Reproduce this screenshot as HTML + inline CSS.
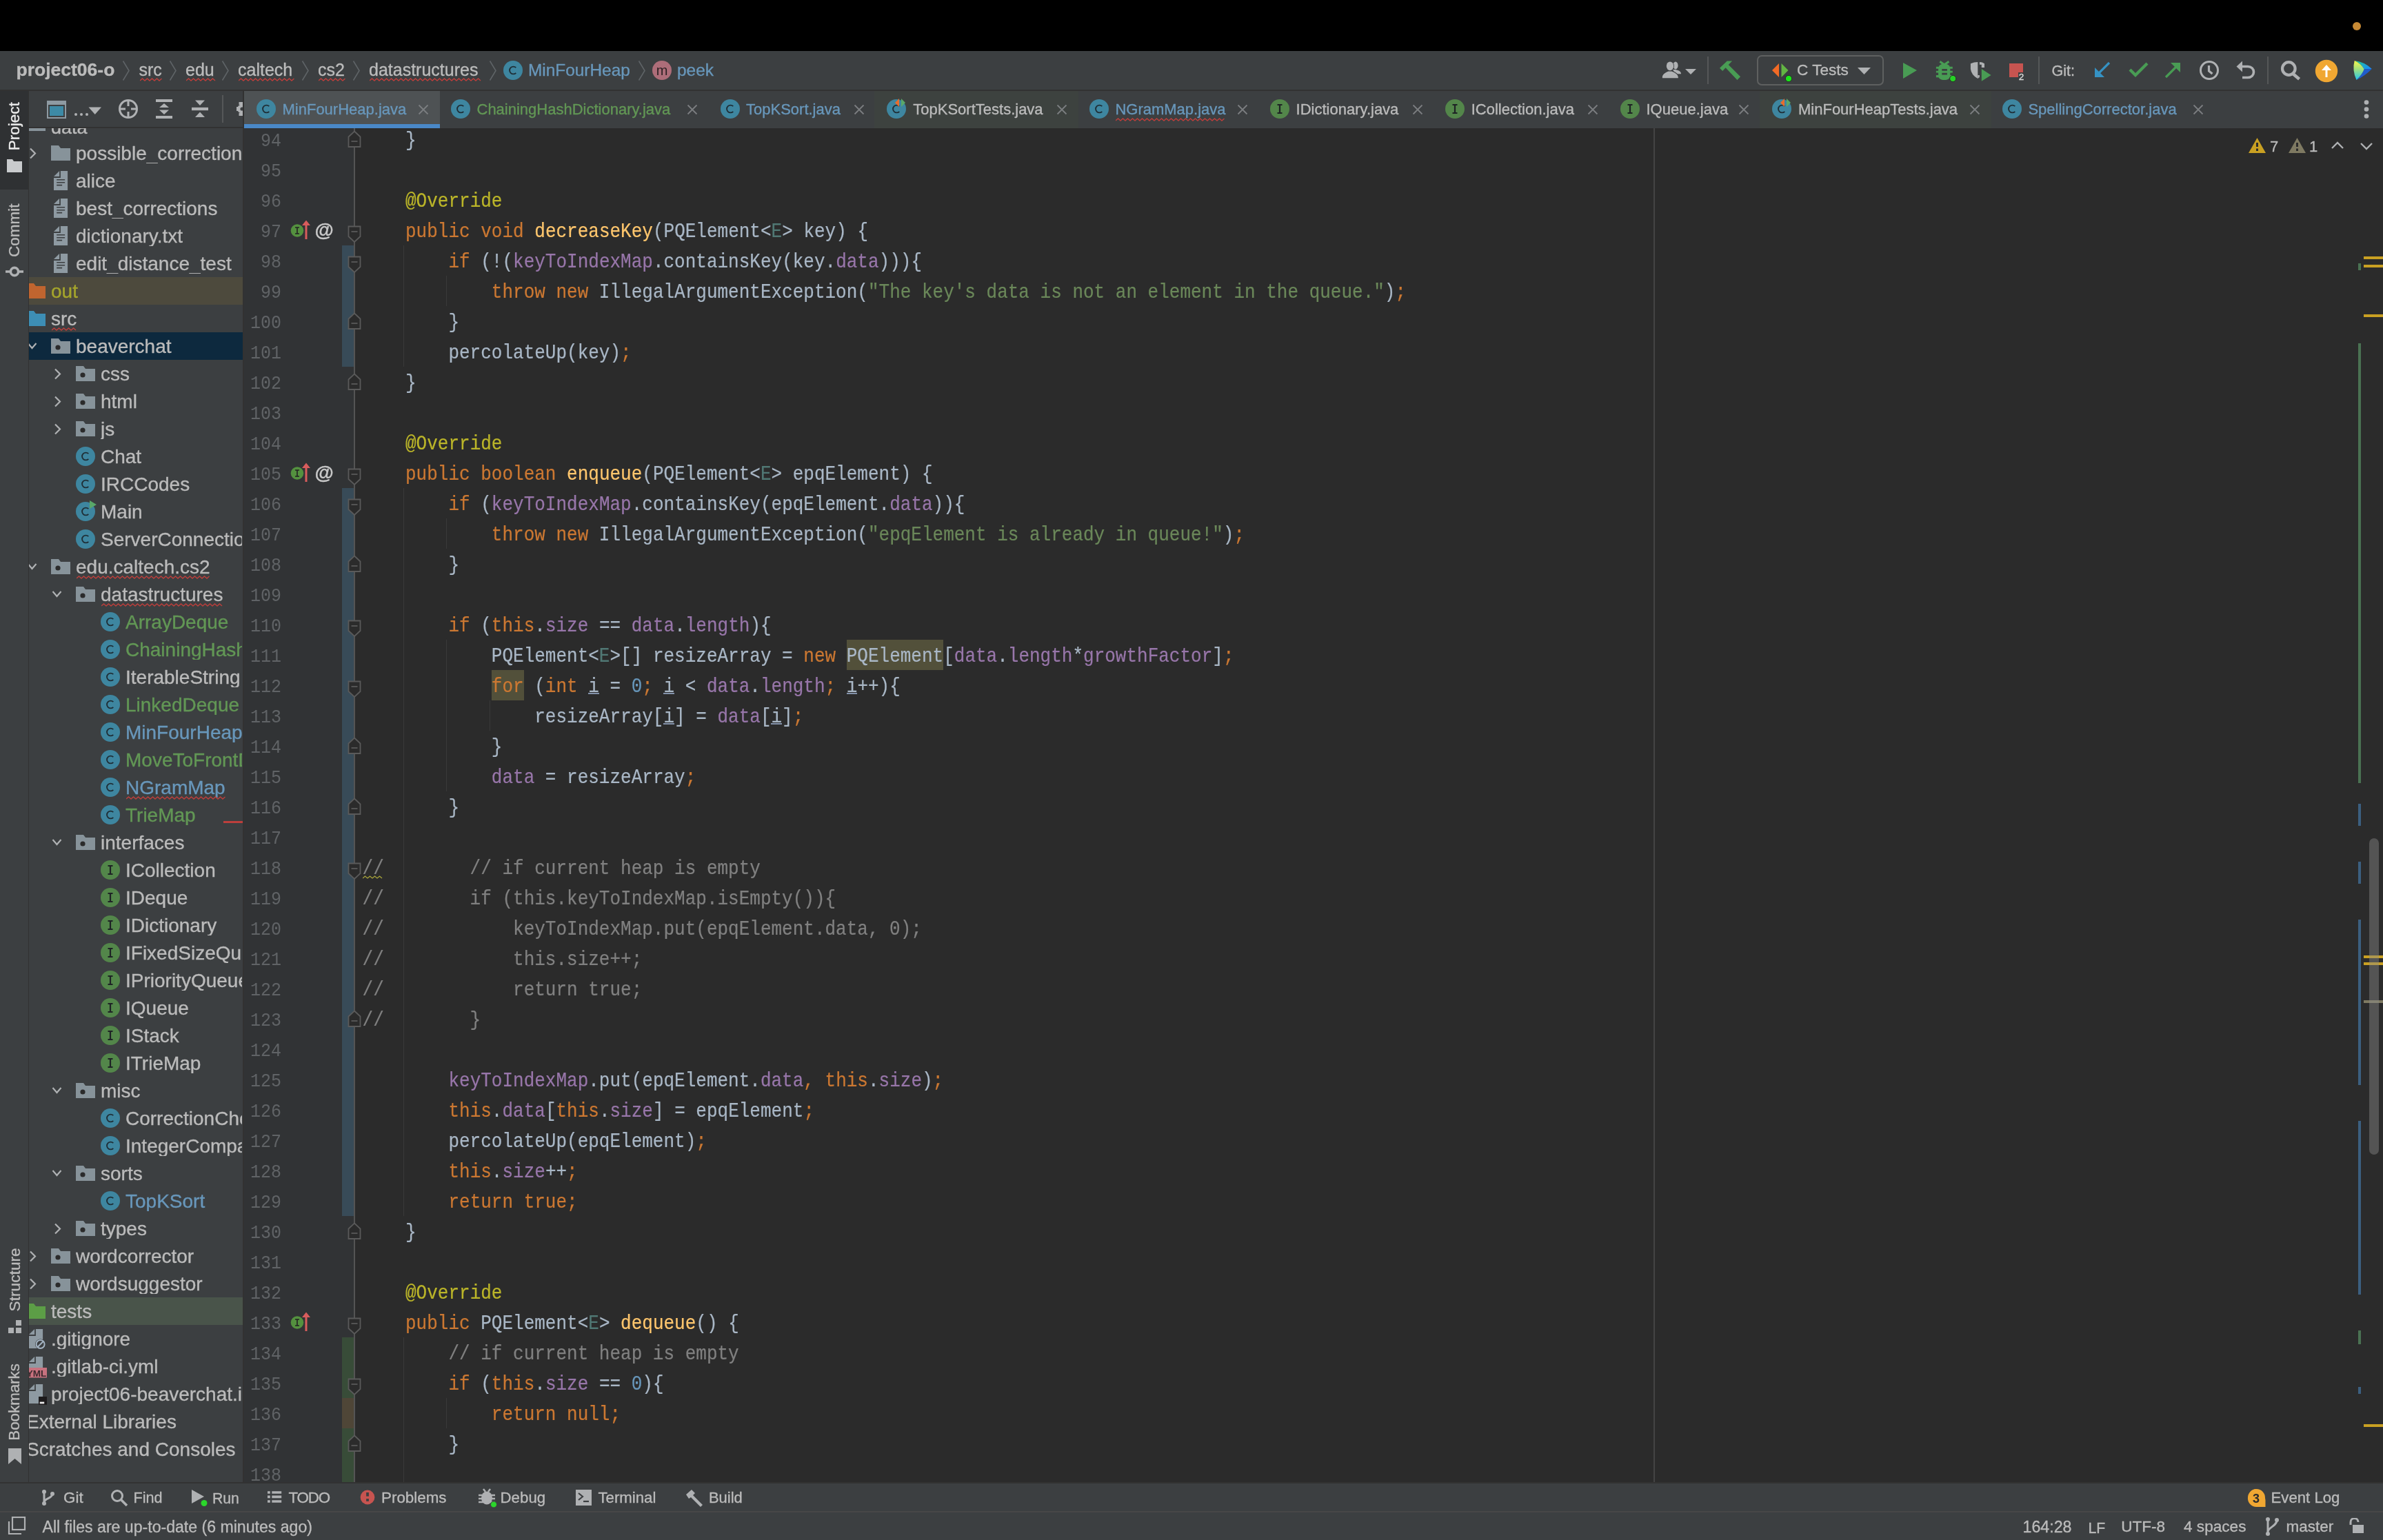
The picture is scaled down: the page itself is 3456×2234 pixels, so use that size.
<!DOCTYPE html>
<html><head><meta charset="utf-8"><title>IntelliJ</title><style>
*{margin:0;padding:0;box-sizing:border-box}
html,body{width:3456px;height:2234px;overflow:hidden;background:#000;-webkit-font-smoothing:antialiased}
#root{position:absolute;left:0;top:0;width:3456px;height:2234px;will-change:transform}
#root>div,#root>svg{position:absolute}
</style></head>
<body><div id="root">
<div style="left:0px;top:0px;width:3456px;height:74px;background:#000;"></div>
<div style="left:3412px;top:32px;width:12px;height:12px;background:#c78a35;border-radius:50%"></div>
<div style="left:0px;top:74px;width:3456px;height:57px;background:#3c3f41;"></div>
<div style="left:0px;top:130px;width:3456px;height:2px;background:#323232;"></div>
<div style="left:0px;top:132px;width:41px;height:2018px;background:#3c3f41;"></div>
<div style="left:0px;top:132px;width:41px;height:143px;background:#2f3133;"></div>
<div style="left:41px;top:132px;width:1px;height:2018px;background:#323232;"></div>
<div style="left:42px;top:132px;width:310px;height:2018px;background:#3c3f41;"></div>
<div style="left:42px;top:184px;width:310px;height:2px;background:#323232;"></div>
<div style="left:352px;top:131px;width:2px;height:2019px;background:#323232;"></div>
<div style="left:354px;top:132px;width:3102px;height:54px;background:#3c3f41;"></div>
<div style="left:354px;top:186px;width:3102px;height:1964px;background:#2b2b2b;"></div>
<div style="left:354px;top:186px;width:160px;height:1964px;background:#313335;"></div>
<div style="left:0px;top:2150px;width:3456px;height:43px;background:#3c3f41;"></div>
<div style="left:0px;top:2150px;width:3456px;height:2px;background:#323232;"></div>
<div style="left:0px;top:2194px;width:3456px;height:40px;background:#3c3f41;"></div>
<div style="left:0px;top:2192px;width:3456px;height:2px;background:#474747;"></div>
<div style="left:712.8px;top:971.5px;width:46.8px;height:44px;background:#52503a;"></div>
<div style="left:1227.6px;top:927.5px;width:140.4px;height:44px;background:#52503a;"></div>
<div style="left:853.2px;top:1004.5px;width:15.6px;height:2px;background:#8493ab;"></div>
<div style="left:962.4000000000001px;top:1004.5px;width:15.6px;height:2px;background:#8493ab;"></div>
<div style="left:1227.6px;top:1004.5px;width:15.6px;height:2px;background:#8493ab;"></div>
<div style="left:962.4000000000001px;top:1048.5px;width:15.6px;height:2px;background:#8493ab;"></div>
<div style="left:1118.4px;top:1048.5px;width:15.6px;height:2px;background:#8493ab;"></div>
<div style="left:585px;top:355.5px;width:1px;height:176.0px;background:#393939;"></div>
<div style="left:647px;top:399.5px;width:1px;height:44.0px;background:#393939;"></div>
<div style="left:585px;top:707.5px;width:1px;height:1056.0px;background:#393939;"></div>
<div style="left:647px;top:751.5px;width:1px;height:44.0px;background:#393939;"></div>
<div style="left:647px;top:927.5px;width:1px;height:220.0px;background:#393939;"></div>
<div style="left:710px;top:1015.5px;width:1px;height:44.0px;background:#393939;"></div>
<div style="left:585px;top:1939.5px;width:1px;height:210.5px;background:#393939;"></div>
<div style="left:647px;top:2027.5px;width:1px;height:44.0px;background:#393939;"></div>
<div style="left:2398px;top:186px;width:2px;height:1964px;background:#444444;"></div>
<div style="left:525.6px;top:183.08px;font:26px/44px 'Liberation Mono', monospace;color:#a9b7c6;white-space:pre;transform:scaleY(1.1);transform-origin:0 28.92px;-webkit-text-stroke:0.2px currentColor">    }</div>
<div style="left:525.6px;top:271.08px;font:26px/44px 'Liberation Mono', monospace;color:#a9b7c6;white-space:pre;transform:scaleY(1.1);transform-origin:0 28.92px;-webkit-text-stroke:0.2px currentColor">    <span style="color:#bbb529">@Override</span></div>
<div style="left:525.6px;top:315.08px;font:26px/44px 'Liberation Mono', monospace;color:#a9b7c6;white-space:pre;transform:scaleY(1.1);transform-origin:0 28.92px;-webkit-text-stroke:0.2px currentColor">    <span style="color:#cc7832">public</span> <span style="color:#cc7832">void</span> <span style="color:#ffc66d">decreaseKey</span>(PQElement&lt;<span style="color:#507874">E</span>&gt; key) {</div>
<div style="left:525.6px;top:359.08px;font:26px/44px 'Liberation Mono', monospace;color:#a9b7c6;white-space:pre;transform:scaleY(1.1);transform-origin:0 28.92px;-webkit-text-stroke:0.2px currentColor">        <span style="color:#cc7832">if</span> (!(<span style="color:#9876aa">keyToIndexMap</span>.containsKey(key.<span style="color:#9876aa">data</span>))){</div>
<div style="left:525.6px;top:403.08px;font:26px/44px 'Liberation Mono', monospace;color:#a9b7c6;white-space:pre;transform:scaleY(1.1);transform-origin:0 28.92px;-webkit-text-stroke:0.2px currentColor">            <span style="color:#cc7832">throw</span> <span style="color:#cc7832">new</span> IllegalArgumentException(<span style="color:#6a8759">&quot;The key&#x27;s data is not an element in the queue.&quot;</span>)<span style="color:#cc7832">;</span></div>
<div style="left:525.6px;top:447.08px;font:26px/44px 'Liberation Mono', monospace;color:#a9b7c6;white-space:pre;transform:scaleY(1.1);transform-origin:0 28.92px;-webkit-text-stroke:0.2px currentColor">        }</div>
<div style="left:525.6px;top:491.08px;font:26px/44px 'Liberation Mono', monospace;color:#a9b7c6;white-space:pre;transform:scaleY(1.1);transform-origin:0 28.92px;-webkit-text-stroke:0.2px currentColor">        percolateUp(key)<span style="color:#cc7832">;</span></div>
<div style="left:525.6px;top:535.08px;font:26px/44px 'Liberation Mono', monospace;color:#a9b7c6;white-space:pre;transform:scaleY(1.1);transform-origin:0 28.92px;-webkit-text-stroke:0.2px currentColor">    }</div>
<div style="left:525.6px;top:623.08px;font:26px/44px 'Liberation Mono', monospace;color:#a9b7c6;white-space:pre;transform:scaleY(1.1);transform-origin:0 28.92px;-webkit-text-stroke:0.2px currentColor">    <span style="color:#bbb529">@Override</span></div>
<div style="left:525.6px;top:667.08px;font:26px/44px 'Liberation Mono', monospace;color:#a9b7c6;white-space:pre;transform:scaleY(1.1);transform-origin:0 28.92px;-webkit-text-stroke:0.2px currentColor">    <span style="color:#cc7832">public</span> <span style="color:#cc7832">boolean</span> <span style="color:#ffc66d">enqueue</span>(PQElement&lt;<span style="color:#507874">E</span>&gt; epqElement) {</div>
<div style="left:525.6px;top:711.08px;font:26px/44px 'Liberation Mono', monospace;color:#a9b7c6;white-space:pre;transform:scaleY(1.1);transform-origin:0 28.92px;-webkit-text-stroke:0.2px currentColor">        <span style="color:#cc7832">if</span> (<span style="color:#9876aa">keyToIndexMap</span>.containsKey(epqElement.<span style="color:#9876aa">data</span>)){</div>
<div style="left:525.6px;top:755.08px;font:26px/44px 'Liberation Mono', monospace;color:#a9b7c6;white-space:pre;transform:scaleY(1.1);transform-origin:0 28.92px;-webkit-text-stroke:0.2px currentColor">            <span style="color:#cc7832">throw</span> <span style="color:#cc7832">new</span> IllegalArgumentException(<span style="color:#6a8759">&quot;epqElement is already in queue!&quot;</span>)<span style="color:#cc7832">;</span></div>
<div style="left:525.6px;top:799.08px;font:26px/44px 'Liberation Mono', monospace;color:#a9b7c6;white-space:pre;transform:scaleY(1.1);transform-origin:0 28.92px;-webkit-text-stroke:0.2px currentColor">        }</div>
<div style="left:525.6px;top:887.08px;font:26px/44px 'Liberation Mono', monospace;color:#a9b7c6;white-space:pre;transform:scaleY(1.1);transform-origin:0 28.92px;-webkit-text-stroke:0.2px currentColor">        <span style="color:#cc7832">if</span> (<span style="color:#cc7832">this</span>.<span style="color:#9876aa">size</span> == <span style="color:#9876aa">data</span>.<span style="color:#9876aa">length</span>){</div>
<div style="left:525.6px;top:931.08px;font:26px/44px 'Liberation Mono', monospace;color:#a9b7c6;white-space:pre;transform:scaleY(1.1);transform-origin:0 28.92px;-webkit-text-stroke:0.2px currentColor">            PQElement&lt;<span style="color:#507874">E</span>&gt;[] resizeArray = <span style="color:#cc7832">new</span> PQElement[<span style="color:#9876aa">data</span>.<span style="color:#9876aa">length</span>*<span style="color:#9876aa">growthFactor</span>]<span style="color:#cc7832">;</span></div>
<div style="left:525.6px;top:975.08px;font:26px/44px 'Liberation Mono', monospace;color:#a9b7c6;white-space:pre;transform:scaleY(1.1);transform-origin:0 28.92px;-webkit-text-stroke:0.2px currentColor">            <span style="color:#cc7832">for</span> (<span style="color:#cc7832">int</span> i = <span style="color:#6897bb">0</span><span style="color:#cc7832">;</span> i &lt; <span style="color:#9876aa">data</span>.<span style="color:#9876aa">length</span><span style="color:#cc7832">;</span> i++){</div>
<div style="left:525.6px;top:1019.08px;font:26px/44px 'Liberation Mono', monospace;color:#a9b7c6;white-space:pre;transform:scaleY(1.1);transform-origin:0 28.92px;-webkit-text-stroke:0.2px currentColor">                resizeArray[i] = <span style="color:#9876aa">data</span>[i]<span style="color:#cc7832">;</span></div>
<div style="left:525.6px;top:1063.08px;font:26px/44px 'Liberation Mono', monospace;color:#a9b7c6;white-space:pre;transform:scaleY(1.1);transform-origin:0 28.92px;-webkit-text-stroke:0.2px currentColor">            }</div>
<div style="left:525.6px;top:1107.08px;font:26px/44px 'Liberation Mono', monospace;color:#a9b7c6;white-space:pre;transform:scaleY(1.1);transform-origin:0 28.92px;-webkit-text-stroke:0.2px currentColor">            <span style="color:#9876aa">data</span> = resizeArray<span style="color:#cc7832">;</span></div>
<div style="left:525.6px;top:1151.08px;font:26px/44px 'Liberation Mono', monospace;color:#a9b7c6;white-space:pre;transform:scaleY(1.1);transform-origin:0 28.92px;-webkit-text-stroke:0.2px currentColor">        }</div>
<div style="left:525.6px;top:1239.08px;font:26px/44px 'Liberation Mono', monospace;color:#a9b7c6;white-space:pre;transform:scaleY(1.1);transform-origin:0 28.92px;-webkit-text-stroke:0.2px currentColor"><span style="color:#808080">//        // if current heap is empty</span></div>
<div style="left:525.6px;top:1283.08px;font:26px/44px 'Liberation Mono', monospace;color:#a9b7c6;white-space:pre;transform:scaleY(1.1);transform-origin:0 28.92px;-webkit-text-stroke:0.2px currentColor"><span style="color:#808080">//        if (this.keyToIndexMap.isEmpty()){</span></div>
<div style="left:525.6px;top:1327.08px;font:26px/44px 'Liberation Mono', monospace;color:#a9b7c6;white-space:pre;transform:scaleY(1.1);transform-origin:0 28.92px;-webkit-text-stroke:0.2px currentColor"><span style="color:#808080">//            keyToIndexMap.put(epqElement.data, 0);</span></div>
<div style="left:525.6px;top:1371.08px;font:26px/44px 'Liberation Mono', monospace;color:#a9b7c6;white-space:pre;transform:scaleY(1.1);transform-origin:0 28.92px;-webkit-text-stroke:0.2px currentColor"><span style="color:#808080">//            this.size++;</span></div>
<div style="left:525.6px;top:1415.08px;font:26px/44px 'Liberation Mono', monospace;color:#a9b7c6;white-space:pre;transform:scaleY(1.1);transform-origin:0 28.92px;-webkit-text-stroke:0.2px currentColor"><span style="color:#808080">//            return true;</span></div>
<div style="left:525.6px;top:1459.08px;font:26px/44px 'Liberation Mono', monospace;color:#a9b7c6;white-space:pre;transform:scaleY(1.1);transform-origin:0 28.92px;-webkit-text-stroke:0.2px currentColor"><span style="color:#808080">//        }</span></div>
<div style="left:525.6px;top:1547.08px;font:26px/44px 'Liberation Mono', monospace;color:#a9b7c6;white-space:pre;transform:scaleY(1.1);transform-origin:0 28.92px;-webkit-text-stroke:0.2px currentColor">        <span style="color:#9876aa">keyToIndexMap</span>.put(epqElement.<span style="color:#9876aa">data</span><span style="color:#cc7832">,</span> <span style="color:#cc7832">this</span>.<span style="color:#9876aa">size</span>)<span style="color:#cc7832">;</span></div>
<div style="left:525.6px;top:1591.08px;font:26px/44px 'Liberation Mono', monospace;color:#a9b7c6;white-space:pre;transform:scaleY(1.1);transform-origin:0 28.92px;-webkit-text-stroke:0.2px currentColor">        <span style="color:#cc7832">this</span>.<span style="color:#9876aa">data</span>[<span style="color:#cc7832">this</span>.<span style="color:#9876aa">size</span>] = epqElement<span style="color:#cc7832">;</span></div>
<div style="left:525.6px;top:1635.08px;font:26px/44px 'Liberation Mono', monospace;color:#a9b7c6;white-space:pre;transform:scaleY(1.1);transform-origin:0 28.92px;-webkit-text-stroke:0.2px currentColor">        percolateUp(epqElement)<span style="color:#cc7832">;</span></div>
<div style="left:525.6px;top:1679.08px;font:26px/44px 'Liberation Mono', monospace;color:#a9b7c6;white-space:pre;transform:scaleY(1.1);transform-origin:0 28.92px;-webkit-text-stroke:0.2px currentColor">        <span style="color:#cc7832">this</span>.<span style="color:#9876aa">size</span>++<span style="color:#cc7832">;</span></div>
<div style="left:525.6px;top:1723.08px;font:26px/44px 'Liberation Mono', monospace;color:#a9b7c6;white-space:pre;transform:scaleY(1.1);transform-origin:0 28.92px;-webkit-text-stroke:0.2px currentColor">        <span style="color:#cc7832">return</span> <span style="color:#cc7832">true</span><span style="color:#cc7832">;</span></div>
<div style="left:525.6px;top:1767.08px;font:26px/44px 'Liberation Mono', monospace;color:#a9b7c6;white-space:pre;transform:scaleY(1.1);transform-origin:0 28.92px;-webkit-text-stroke:0.2px currentColor">    }</div>
<div style="left:525.6px;top:1855.08px;font:26px/44px 'Liberation Mono', monospace;color:#a9b7c6;white-space:pre;transform:scaleY(1.1);transform-origin:0 28.92px;-webkit-text-stroke:0.2px currentColor">    <span style="color:#bbb529">@Override</span></div>
<div style="left:525.6px;top:1899.08px;font:26px/44px 'Liberation Mono', monospace;color:#a9b7c6;white-space:pre;transform:scaleY(1.1);transform-origin:0 28.92px;-webkit-text-stroke:0.2px currentColor">    <span style="color:#cc7832">public</span> PQElement&lt;<span style="color:#507874">E</span>&gt; <span style="color:#ffc66d">dequeue</span>() {</div>
<div style="left:525.6px;top:1943.08px;font:26px/44px 'Liberation Mono', monospace;color:#a9b7c6;white-space:pre;transform:scaleY(1.1);transform-origin:0 28.92px;-webkit-text-stroke:0.2px currentColor">        <span style="color:#808080">// if current heap is empty</span></div>
<div style="left:525.6px;top:1987.08px;font:26px/44px 'Liberation Mono', monospace;color:#a9b7c6;white-space:pre;transform:scaleY(1.1);transform-origin:0 28.92px;-webkit-text-stroke:0.2px currentColor">        <span style="color:#cc7832">if</span> (<span style="color:#cc7832">this</span>.<span style="color:#9876aa">size</span> == <span style="color:#6897bb">0</span>){</div>
<div style="left:525.6px;top:2031.08px;font:26px/44px 'Liberation Mono', monospace;color:#a9b7c6;white-space:pre;transform:scaleY(1.1);transform-origin:0 28.92px;-webkit-text-stroke:0.2px currentColor">            <span style="color:#cc7832">return</span> <span style="color:#cc7832">null</span><span style="color:#cc7832">;</span></div>
<div style="left:525.6px;top:2075.08px;font:26px/44px 'Liberation Mono', monospace;color:#a9b7c6;white-space:pre;transform:scaleY(1.1);transform-origin:0 28.92px;-webkit-text-stroke:0.2px currentColor">        }</div>
<svg style="left:526px;top:1269.5px;" width="30" height="6" viewBox="0 0 30 6"><path d="M0 4 L3.5 1 L7 4 L10.5 1 L14 4 L17.5 1 L21 4 L24.5 1 L28 4" stroke="#a8a43a" stroke-width="1.3" fill="none"/></svg>
<div style="left:378.00px;top:192.85px;font:25px/25px 'Liberation Mono', monospace;color:#606366;white-space:pre;transform:scaleY(1.1);transform-origin:0 19.15px;">94</div>
<div style="left:378.00px;top:236.85px;font:25px/25px 'Liberation Mono', monospace;color:#606366;white-space:pre;transform:scaleY(1.1);transform-origin:0 19.15px;">95</div>
<div style="left:378.00px;top:280.85px;font:25px/25px 'Liberation Mono', monospace;color:#606366;white-space:pre;transform:scaleY(1.1);transform-origin:0 19.15px;">96</div>
<div style="left:378.00px;top:324.85px;font:25px/25px 'Liberation Mono', monospace;color:#606366;white-space:pre;transform:scaleY(1.1);transform-origin:0 19.15px;">97</div>
<div style="left:378.00px;top:368.85px;font:25px/25px 'Liberation Mono', monospace;color:#606366;white-space:pre;transform:scaleY(1.1);transform-origin:0 19.15px;">98</div>
<div style="left:378.00px;top:412.85px;font:25px/25px 'Liberation Mono', monospace;color:#606366;white-space:pre;transform:scaleY(1.1);transform-origin:0 19.15px;">99</div>
<div style="left:363.00px;top:456.85px;font:25px/25px 'Liberation Mono', monospace;color:#606366;white-space:pre;transform:scaleY(1.1);transform-origin:0 19.15px;">100</div>
<div style="left:363.00px;top:500.85px;font:25px/25px 'Liberation Mono', monospace;color:#606366;white-space:pre;transform:scaleY(1.1);transform-origin:0 19.15px;">101</div>
<div style="left:363.00px;top:544.85px;font:25px/25px 'Liberation Mono', monospace;color:#606366;white-space:pre;transform:scaleY(1.1);transform-origin:0 19.15px;">102</div>
<div style="left:363.00px;top:588.85px;font:25px/25px 'Liberation Mono', monospace;color:#606366;white-space:pre;transform:scaleY(1.1);transform-origin:0 19.15px;">103</div>
<div style="left:363.00px;top:632.85px;font:25px/25px 'Liberation Mono', monospace;color:#606366;white-space:pre;transform:scaleY(1.1);transform-origin:0 19.15px;">104</div>
<div style="left:363.00px;top:676.85px;font:25px/25px 'Liberation Mono', monospace;color:#606366;white-space:pre;transform:scaleY(1.1);transform-origin:0 19.15px;">105</div>
<div style="left:363.00px;top:720.85px;font:25px/25px 'Liberation Mono', monospace;color:#606366;white-space:pre;transform:scaleY(1.1);transform-origin:0 19.15px;">106</div>
<div style="left:363.00px;top:764.85px;font:25px/25px 'Liberation Mono', monospace;color:#606366;white-space:pre;transform:scaleY(1.1);transform-origin:0 19.15px;">107</div>
<div style="left:363.00px;top:808.85px;font:25px/25px 'Liberation Mono', monospace;color:#606366;white-space:pre;transform:scaleY(1.1);transform-origin:0 19.15px;">108</div>
<div style="left:363.00px;top:852.85px;font:25px/25px 'Liberation Mono', monospace;color:#606366;white-space:pre;transform:scaleY(1.1);transform-origin:0 19.15px;">109</div>
<div style="left:363.00px;top:896.85px;font:25px/25px 'Liberation Mono', monospace;color:#606366;white-space:pre;transform:scaleY(1.1);transform-origin:0 19.15px;">110</div>
<div style="left:363.00px;top:940.85px;font:25px/25px 'Liberation Mono', monospace;color:#606366;white-space:pre;transform:scaleY(1.1);transform-origin:0 19.15px;">111</div>
<div style="left:363.00px;top:984.85px;font:25px/25px 'Liberation Mono', monospace;color:#606366;white-space:pre;transform:scaleY(1.1);transform-origin:0 19.15px;">112</div>
<div style="left:363.00px;top:1028.85px;font:25px/25px 'Liberation Mono', monospace;color:#606366;white-space:pre;transform:scaleY(1.1);transform-origin:0 19.15px;">113</div>
<div style="left:363.00px;top:1072.85px;font:25px/25px 'Liberation Mono', monospace;color:#606366;white-space:pre;transform:scaleY(1.1);transform-origin:0 19.15px;">114</div>
<div style="left:363.00px;top:1116.85px;font:25px/25px 'Liberation Mono', monospace;color:#606366;white-space:pre;transform:scaleY(1.1);transform-origin:0 19.15px;">115</div>
<div style="left:363.00px;top:1160.85px;font:25px/25px 'Liberation Mono', monospace;color:#606366;white-space:pre;transform:scaleY(1.1);transform-origin:0 19.15px;">116</div>
<div style="left:363.00px;top:1204.85px;font:25px/25px 'Liberation Mono', monospace;color:#606366;white-space:pre;transform:scaleY(1.1);transform-origin:0 19.15px;">117</div>
<div style="left:363.00px;top:1248.85px;font:25px/25px 'Liberation Mono', monospace;color:#606366;white-space:pre;transform:scaleY(1.1);transform-origin:0 19.15px;">118</div>
<div style="left:363.00px;top:1292.85px;font:25px/25px 'Liberation Mono', monospace;color:#606366;white-space:pre;transform:scaleY(1.1);transform-origin:0 19.15px;">119</div>
<div style="left:363.00px;top:1336.85px;font:25px/25px 'Liberation Mono', monospace;color:#606366;white-space:pre;transform:scaleY(1.1);transform-origin:0 19.15px;">120</div>
<div style="left:363.00px;top:1380.85px;font:25px/25px 'Liberation Mono', monospace;color:#606366;white-space:pre;transform:scaleY(1.1);transform-origin:0 19.15px;">121</div>
<div style="left:363.00px;top:1424.85px;font:25px/25px 'Liberation Mono', monospace;color:#606366;white-space:pre;transform:scaleY(1.1);transform-origin:0 19.15px;">122</div>
<div style="left:363.00px;top:1468.85px;font:25px/25px 'Liberation Mono', monospace;color:#606366;white-space:pre;transform:scaleY(1.1);transform-origin:0 19.15px;">123</div>
<div style="left:363.00px;top:1512.85px;font:25px/25px 'Liberation Mono', monospace;color:#606366;white-space:pre;transform:scaleY(1.1);transform-origin:0 19.15px;">124</div>
<div style="left:363.00px;top:1556.85px;font:25px/25px 'Liberation Mono', monospace;color:#606366;white-space:pre;transform:scaleY(1.1);transform-origin:0 19.15px;">125</div>
<div style="left:363.00px;top:1600.85px;font:25px/25px 'Liberation Mono', monospace;color:#606366;white-space:pre;transform:scaleY(1.1);transform-origin:0 19.15px;">126</div>
<div style="left:363.00px;top:1644.85px;font:25px/25px 'Liberation Mono', monospace;color:#606366;white-space:pre;transform:scaleY(1.1);transform-origin:0 19.15px;">127</div>
<div style="left:363.00px;top:1688.85px;font:25px/25px 'Liberation Mono', monospace;color:#606366;white-space:pre;transform:scaleY(1.1);transform-origin:0 19.15px;">128</div>
<div style="left:363.00px;top:1732.85px;font:25px/25px 'Liberation Mono', monospace;color:#606366;white-space:pre;transform:scaleY(1.1);transform-origin:0 19.15px;">129</div>
<div style="left:363.00px;top:1776.85px;font:25px/25px 'Liberation Mono', monospace;color:#606366;white-space:pre;transform:scaleY(1.1);transform-origin:0 19.15px;">130</div>
<div style="left:363.00px;top:1820.85px;font:25px/25px 'Liberation Mono', monospace;color:#606366;white-space:pre;transform:scaleY(1.1);transform-origin:0 19.15px;">131</div>
<div style="left:363.00px;top:1864.85px;font:25px/25px 'Liberation Mono', monospace;color:#606366;white-space:pre;transform:scaleY(1.1);transform-origin:0 19.15px;">132</div>
<div style="left:363.00px;top:1908.85px;font:25px/25px 'Liberation Mono', monospace;color:#606366;white-space:pre;transform:scaleY(1.1);transform-origin:0 19.15px;">133</div>
<div style="left:363.00px;top:1952.85px;font:25px/25px 'Liberation Mono', monospace;color:#606366;white-space:pre;transform:scaleY(1.1);transform-origin:0 19.15px;">134</div>
<div style="left:363.00px;top:1996.85px;font:25px/25px 'Liberation Mono', monospace;color:#606366;white-space:pre;transform:scaleY(1.1);transform-origin:0 19.15px;">135</div>
<div style="left:363.00px;top:2040.85px;font:25px/25px 'Liberation Mono', monospace;color:#606366;white-space:pre;transform:scaleY(1.1);transform-origin:0 19.15px;">136</div>
<div style="left:363.00px;top:2084.85px;font:25px/25px 'Liberation Mono', monospace;color:#606366;white-space:pre;transform:scaleY(1.1);transform-origin:0 19.15px;">137</div>
<div style="left:363.00px;top:2128.85px;font:25px/25px 'Liberation Mono', monospace;color:#606366;white-space:pre;transform:scaleY(1.1);transform-origin:0 19.15px;">138</div>
<div style="left:496px;top:355.5px;width:17px;height:176px;background:#384b58;"></div>
<div style="left:496px;top:707.5px;width:17px;height:1056px;background:#384b58;"></div>
<div style="left:496px;top:1939.5px;width:17px;height:88px;background:#384c38;"></div>
<div style="left:496px;top:2027.5px;width:17px;height:44px;background:#4f4637;"></div>
<div style="left:496px;top:2071.5px;width:17px;height:78.5px;background:#384c38;"></div>
<div style="left:513px;top:186px;width:2px;height:1964px;background:#545454;"></div>
<svg style="left:504px;top:326.5px;" width="20" height="26" viewBox="0 0 20 26"><path d="M1.5 1.5 H18.5 V16 L10 24 L1.5 16 Z" fill="#2b2b2b" stroke="#5a5a5a" stroke-width="1.8"/><path d="M5.5 9 H14.5" stroke="#5a5a5a" stroke-width="1.8"/></svg>
<svg style="left:504px;top:370.5px;" width="20" height="26" viewBox="0 0 20 26"><path d="M1.5 1.5 H18.5 V16 L10 24 L1.5 16 Z" fill="#2b2b2b" stroke="#5a5a5a" stroke-width="1.8"/><path d="M5.5 9 H14.5" stroke="#5a5a5a" stroke-width="1.8"/></svg>
<svg style="left:504px;top:678.5px;" width="20" height="26" viewBox="0 0 20 26"><path d="M1.5 1.5 H18.5 V16 L10 24 L1.5 16 Z" fill="#2b2b2b" stroke="#5a5a5a" stroke-width="1.8"/><path d="M5.5 9 H14.5" stroke="#5a5a5a" stroke-width="1.8"/></svg>
<svg style="left:504px;top:722.5px;" width="20" height="26" viewBox="0 0 20 26"><path d="M1.5 1.5 H18.5 V16 L10 24 L1.5 16 Z" fill="#2b2b2b" stroke="#5a5a5a" stroke-width="1.8"/><path d="M5.5 9 H14.5" stroke="#5a5a5a" stroke-width="1.8"/></svg>
<svg style="left:504px;top:898.5px;" width="20" height="26" viewBox="0 0 20 26"><path d="M1.5 1.5 H18.5 V16 L10 24 L1.5 16 Z" fill="#2b2b2b" stroke="#5a5a5a" stroke-width="1.8"/><path d="M5.5 9 H14.5" stroke="#5a5a5a" stroke-width="1.8"/></svg>
<svg style="left:504px;top:986.5px;" width="20" height="26" viewBox="0 0 20 26"><path d="M1.5 1.5 H18.5 V16 L10 24 L1.5 16 Z" fill="#2b2b2b" stroke="#5a5a5a" stroke-width="1.8"/><path d="M5.5 9 H14.5" stroke="#5a5a5a" stroke-width="1.8"/></svg>
<svg style="left:504px;top:1250.5px;" width="20" height="26" viewBox="0 0 20 26"><path d="M1.5 1.5 H18.5 V16 L10 24 L1.5 16 Z" fill="#2b2b2b" stroke="#5a5a5a" stroke-width="1.8"/><path d="M5.5 9 H14.5" stroke="#5a5a5a" stroke-width="1.8"/></svg>
<svg style="left:504px;top:1910.5px;" width="20" height="26" viewBox="0 0 20 26"><path d="M1.5 1.5 H18.5 V16 L10 24 L1.5 16 Z" fill="#2b2b2b" stroke="#5a5a5a" stroke-width="1.8"/><path d="M5.5 9 H14.5" stroke="#5a5a5a" stroke-width="1.8"/></svg>
<svg style="left:504px;top:1998.5px;" width="20" height="26" viewBox="0 0 20 26"><path d="M1.5 1.5 H18.5 V16 L10 24 L1.5 16 Z" fill="#2b2b2b" stroke="#5a5a5a" stroke-width="1.8"/><path d="M5.5 9 H14.5" stroke="#5a5a5a" stroke-width="1.8"/></svg>
<svg style="left:504px;top:188.5px;" width="20" height="26" viewBox="0 0 20 26"><path d="M10 1.5 L18.5 9.5 V24 H1.5 V9.5 Z" fill="#2b2b2b" stroke="#5a5a5a" stroke-width="1.8"/><path d="M5.5 16 H14.5" stroke="#5a5a5a" stroke-width="1.8"/></svg>
<svg style="left:504px;top:452.5px;" width="20" height="26" viewBox="0 0 20 26"><path d="M10 1.5 L18.5 9.5 V24 H1.5 V9.5 Z" fill="#2b2b2b" stroke="#5a5a5a" stroke-width="1.8"/><path d="M5.5 16 H14.5" stroke="#5a5a5a" stroke-width="1.8"/></svg>
<svg style="left:504px;top:540.5px;" width="20" height="26" viewBox="0 0 20 26"><path d="M10 1.5 L18.5 9.5 V24 H1.5 V9.5 Z" fill="#2b2b2b" stroke="#5a5a5a" stroke-width="1.8"/><path d="M5.5 16 H14.5" stroke="#5a5a5a" stroke-width="1.8"/></svg>
<svg style="left:504px;top:804.5px;" width="20" height="26" viewBox="0 0 20 26"><path d="M10 1.5 L18.5 9.5 V24 H1.5 V9.5 Z" fill="#2b2b2b" stroke="#5a5a5a" stroke-width="1.8"/><path d="M5.5 16 H14.5" stroke="#5a5a5a" stroke-width="1.8"/></svg>
<svg style="left:504px;top:1068.5px;" width="20" height="26" viewBox="0 0 20 26"><path d="M10 1.5 L18.5 9.5 V24 H1.5 V9.5 Z" fill="#2b2b2b" stroke="#5a5a5a" stroke-width="1.8"/><path d="M5.5 16 H14.5" stroke="#5a5a5a" stroke-width="1.8"/></svg>
<svg style="left:504px;top:1156.5px;" width="20" height="26" viewBox="0 0 20 26"><path d="M10 1.5 L18.5 9.5 V24 H1.5 V9.5 Z" fill="#2b2b2b" stroke="#5a5a5a" stroke-width="1.8"/><path d="M5.5 16 H14.5" stroke="#5a5a5a" stroke-width="1.8"/></svg>
<svg style="left:504px;top:1464.5px;" width="20" height="26" viewBox="0 0 20 26"><path d="M10 1.5 L18.5 9.5 V24 H1.5 V9.5 Z" fill="#2b2b2b" stroke="#5a5a5a" stroke-width="1.8"/><path d="M5.5 16 H14.5" stroke="#5a5a5a" stroke-width="1.8"/></svg>
<svg style="left:504px;top:1772.5px;" width="20" height="26" viewBox="0 0 20 26"><path d="M10 1.5 L18.5 9.5 V24 H1.5 V9.5 Z" fill="#2b2b2b" stroke="#5a5a5a" stroke-width="1.8"/><path d="M5.5 16 H14.5" stroke="#5a5a5a" stroke-width="1.8"/></svg>
<svg style="left:504px;top:2080.5px;" width="20" height="26" viewBox="0 0 20 26"><path d="M10 1.5 L18.5 9.5 V24 H1.5 V9.5 Z" fill="#2b2b2b" stroke="#5a5a5a" stroke-width="1.8"/><path d="M5.5 16 H14.5" stroke="#5a5a5a" stroke-width="1.8"/></svg>
<svg style="left:420px;top:318.0px;" width="34" height="30" viewBox="0 0 34 30"><circle cx="11" cy="16.5" r="9.3" fill="#54913f"/><path d="M8 12 H14 M11 12 V21 M8 21 H14" stroke="#222" stroke-width="1.6"/><path d="M24 29 V8" stroke="#d85c5c" stroke-width="3"/><path d="M18 9 L24 1.5 L30 9 Z" fill="#d85c5c"/></svg>
<div style="left:456.50px;top:319.80px;font:bold 28px/28px 'Liberation Sans', sans-serif;color:#c8c8c8;white-space:pre;-webkit-text-stroke:0.35px currentColor;">@</div>
<svg style="left:420px;top:670.0px;" width="34" height="30" viewBox="0 0 34 30"><circle cx="11" cy="16.5" r="9.3" fill="#54913f"/><path d="M8 12 H14 M11 12 V21 M8 21 H14" stroke="#222" stroke-width="1.6"/><path d="M24 29 V8" stroke="#d85c5c" stroke-width="3"/><path d="M18 9 L24 1.5 L30 9 Z" fill="#d85c5c"/></svg>
<div style="left:456.50px;top:671.80px;font:bold 28px/28px 'Liberation Sans', sans-serif;color:#c8c8c8;white-space:pre;-webkit-text-stroke:0.35px currentColor;">@</div>
<svg style="left:420px;top:1902.0px;" width="34" height="30" viewBox="0 0 34 30"><circle cx="11" cy="16.5" r="9.3" fill="#54913f"/><path d="M8 12 H14 M11 12 V21 M8 21 H14" stroke="#222" stroke-width="1.6"/><path d="M24 29 V8" stroke="#d85c5c" stroke-width="3"/><path d="M18 9 L24 1.5 L30 9 Z" fill="#d85c5c"/></svg>
<div style="left:23.50px;top:87.77px;font:bold 26.5px/26.5px 'Liberation Sans', sans-serif;color:#bbbbbb;white-space:pre;-webkit-text-stroke:0.35px currentColor;">project06-o</div>
<svg style="left:177px;top:87px;" width="12" height="32" viewBox="0 0 12 32"><path d="M1.5 1.5 L10 15.5 L1.5 29.5" stroke="#5f6467" stroke-width="1.6" fill="none"/></svg>
<div style="left:201.50px;top:89.04px;font:25px/25px 'Liberation Sans', sans-serif;color:#bbbbbb;white-space:pre;-webkit-text-stroke:0.35px currentColor;">src</div>
<svg style="left:202.5px;top:112.5px;" width="35" height="6" viewBox="0 0 35 6"><path d="M0 4 L3.5 1 L7.0 4 L10.5 1 L14.0 4 L17.5 1 L21.0 4 L24.5 1 L28.0 4 L31.5 1" stroke="#bc3f3c" stroke-width="1.4" fill="none"/></svg>
<div style="left:269.00px;top:89.04px;font:25px/25px 'Liberation Sans', sans-serif;color:#bbbbbb;white-space:pre;-webkit-text-stroke:0.35px currentColor;">edu</div>
<svg style="left:270px;top:112.5px;" width="44" height="6" viewBox="0 0 44 6"><path d="M0 4 L3.5 1 L7.0 4 L10.5 1 L14.0 4 L17.5 1 L21.0 4 L24.5 1 L28.0 4 L31.5 1 L35.0 4 L38.5 1 L42.0 4" stroke="#bc3f3c" stroke-width="1.4" fill="none"/></svg>
<div style="left:345.00px;top:89.04px;font:25px/25px 'Liberation Sans', sans-serif;color:#bbbbbb;white-space:pre;-webkit-text-stroke:0.35px currentColor;">caltech</div>
<svg style="left:346px;top:112.5px;" width="83" height="6" viewBox="0 0 83 6"><path d="M0 4 L3.5 1 L7.0 4 L10.5 1 L14.0 4 L17.5 1 L21.0 4 L24.5 1 L28.0 4 L31.5 1 L35.0 4 L38.5 1 L42.0 4 L45.5 1 L49.0 4 L52.5 1 L56.0 4 L59.5 1 L63.0 4 L66.5 1 L70.0 4 L73.5 1 L77.0 4 L80.5 1" stroke="#bc3f3c" stroke-width="1.4" fill="none"/></svg>
<div style="left:461.00px;top:89.04px;font:25px/25px 'Liberation Sans', sans-serif;color:#bbbbbb;white-space:pre;-webkit-text-stroke:0.35px currentColor;">cs2</div>
<svg style="left:462px;top:112.5px;" width="42" height="6" viewBox="0 0 42 6"><path d="M0 4 L3.5 1 L7.0 4 L10.5 1 L14.0 4 L17.5 1 L21.0 4 L24.5 1 L28.0 4 L31.5 1 L35.0 4 L38.5 1" stroke="#bc3f3c" stroke-width="1.4" fill="none"/></svg>
<div style="left:535.00px;top:89.04px;font:25px/25px 'Liberation Sans', sans-serif;color:#bbbbbb;white-space:pre;-webkit-text-stroke:0.35px currentColor;">datastructures</div>
<svg style="left:536px;top:112.5px;" width="165" height="6" viewBox="0 0 165 6"><path d="M0 4 L3.5 1 L7.0 4 L10.5 1 L14.0 4 L17.5 1 L21.0 4 L24.5 1 L28.0 4 L31.5 1 L35.0 4 L38.5 1 L42.0 4 L45.5 1 L49.0 4 L52.5 1 L56.0 4 L59.5 1 L63.0 4 L66.5 1 L70.0 4 L73.5 1 L77.0 4 L80.5 1 L84.0 4 L87.5 1 L91.0 4 L94.5 1 L98.0 4 L101.5 1 L105.0 4 L108.5 1 L112.0 4 L115.5 1 L119.0 4 L122.5 1 L126.0 4 L129.5 1 L133.0 4 L136.5 1 L140.0 4 L143.5 1 L147.0 4 L150.5 1 L154.0 4 L157.5 1 L161.0 4" stroke="#bc3f3c" stroke-width="1.4" fill="none"/></svg>
<svg style="left:245px;top:87px;" width="12" height="32" viewBox="0 0 12 32"><path d="M1.5 1.5 L10 15.5 L1.5 29.5" stroke="#5f6467" stroke-width="1.6" fill="none"/></svg>
<svg style="left:321px;top:87px;" width="12" height="32" viewBox="0 0 12 32"><path d="M1.5 1.5 L10 15.5 L1.5 29.5" stroke="#5f6467" stroke-width="1.6" fill="none"/></svg>
<svg style="left:437px;top:87px;" width="12" height="32" viewBox="0 0 12 32"><path d="M1.5 1.5 L10 15.5 L1.5 29.5" stroke="#5f6467" stroke-width="1.6" fill="none"/></svg>
<svg style="left:511px;top:87px;" width="12" height="32" viewBox="0 0 12 32"><path d="M1.5 1.5 L10 15.5 L1.5 29.5" stroke="#5f6467" stroke-width="1.6" fill="none"/></svg>
<svg style="left:709px;top:87px;" width="12" height="32" viewBox="0 0 12 32"><path d="M1.5 1.5 L10 15.5 L1.5 29.5" stroke="#5f6467" stroke-width="1.6" fill="none"/></svg>
<svg style="left:925px;top:87px;" width="12" height="32" viewBox="0 0 12 32"><path d="M1.5 1.5 L10 15.5 L1.5 29.5" stroke="#5f6467" stroke-width="1.6" fill="none"/></svg>
<svg style="left:730px;top:88px;" width="28" height="28" viewBox="0 0 28 28"><circle cx="14" cy="14" r="14" fill="#3e86a0"/><path d="M18.3 10.2 A5.4 5.4 0 1 0 18.3 17.8" stroke="#1f2e36" stroke-width="1.9" fill="none"/></svg>
<div style="left:766.00px;top:89.55px;font:24.4px/24.4px 'Liberation Sans', sans-serif;color:#6897bb;white-space:pre;-webkit-text-stroke:0.35px currentColor;">MinFourHeap</div>
<svg style="left:946px;top:88px;" width="28" height="28" viewBox="0 0 28 28"><circle cx="14" cy="14" r="14" fill="#ad6d79"/><text x="14" y="20.5" text-anchor="middle" font-family="Liberation Sans" font-size="20" fill="#2a1f22">m</text></svg>
<div style="left:982.00px;top:89.55px;font:24.4px/24.4px 'Liberation Sans', sans-serif;color:#6897bb;white-space:pre;-webkit-text-stroke:0.35px currentColor;">peek</div>
<svg style="left:2400px;top:80px;" width="64" height="40" viewBox="0 0 64 40"><ellipse cx="30" cy="15" rx="3.6" ry="5.4" fill="#afb1b3"/><path d="M26 21 L30 21 C35 22 38 24 38 27.3 H30 Z" fill="#afb1b3"/><g stroke="#3c3f41" stroke-width="1.6"><ellipse cx="22" cy="15.8" rx="5.2" ry="6.4" fill="#afb1b3"/><path d="M9.7 33.2 C9.7 27.5 14 25.6 19.5 23.6 H24.5 C30 25.6 34.6 27.5 34.6 33.2 Z" fill="#afb1b3"/></g><ellipse cx="22" cy="15.8" rx="5.2" ry="6.4" fill="#afb1b3"/><path d="M11 33.2 C11 27.5 15 25.6 19.5 23.6 H24.5 C29 25.6 33.8 27.5 33.8 33.2 Z" fill="#afb1b3"/><path d="M44 20 H60 L52 28 Z" fill="#afb1b3"/></svg>
<div style="left:2476px;top:82px;width:2px;height:40px;background:#555758;"></div>
<svg style="left:2492px;top:86px;" width="34" height="32" viewBox="0 0 34 32"><path d="M2 12.8 L12.7 2.5 H20.1 L14.8 8.1 L32.1 25.2 L27.4 29.9 L10.6 12.2 L6.2 16.9 Z" fill="#499c54"/></svg>
<div style="left:2548px;top:80px;width:184px;height:44px;background:transparent;border:2px solid #5e6060;border-radius:7px"></div>
<svg style="left:2568px;top:91px;" width="32" height="30" viewBox="0 0 32 30"><path d="M12 1 L2 11 L12 21 Z" fill="#f26a25"/><path d="M15.5 1 L25.5 11 L15.5 21 Z" fill="#62b543"/><circle cx="26" cy="23" r="4.6" fill="#19e619" stroke="#222" stroke-width="0.8"/></svg>
<div style="left:2606.00px;top:90.67px;font:22.6px/22.6px 'Liberation Sans', sans-serif;color:#bbbbbb;white-space:pre;-webkit-text-stroke:0.35px currentColor;">C Tests</div>
<svg style="left:2694px;top:97px;" width="20" height="12" viewBox="0 0 20 12"><path d="M0 1 H19 L9.5 11 Z" fill="#afb1b3"/></svg>
<svg style="left:2759px;top:90px;" width="22" height="25" viewBox="0 0 22 25"><path d="M1 1 L21 12 L1 24 Z" fill="#499c54"/></svg>
<svg style="left:2805px;top:86px;" width="34" height="34" viewBox="0 0 34 34"><path d="M8.4 3.2 L14.7 7.8 L21.4 3.2" stroke="#499c54" stroke-width="3" fill="none"/><path d="M6.1 14 C6.1 9 10 6.6 14.7 6.6 C19.4 6.6 23.3 9 23.3 14 V24 C23.3 28 19.4 30.1 14.7 30.1 C10 30.1 6.1 28 6.1 24 Z" fill="#499c54"/><path d="M2.9 10.8 H26.8 V13.7 H2.9 Z M2.9 16.7 H26.8 V19.6 H2.9 Z M2.9 23 H26.8 V26.3 H2.9 Z" fill="#499c54"/><path d="M11.3 14.1 H18.9 V16.8 H11.3 Z M11.3 19.8 H18.9 V22.5 H11.3 Z" fill="#3c3f41"/><circle cx="27.2" cy="28" r="4.6" fill="#26d126" stroke="#2b2b2b" stroke-width="1"/></svg>
<svg style="left:2855px;top:86px;" width="34" height="34" viewBox="0 0 34 34"><path d="M2.9 6.2 Q8 4 13.3 4 V28 Q4 23 2.9 14 Z" fill="#afb1b3"/><path d="M15.9 4 Q20 4 23 6.2 V12 H18.8 V7.8 H15.9 Z" fill="#afb1b3"/><path d="M13.3 23 H15.9 V26 L13.3 28 Z" fill="#afb1b3"/><path d="M18.8 14.1 L32.6 23 L18.8 31.8 Z" fill="#499c54"/></svg>
<div style="left:2914px;top:92px;width:20px;height:20px;background:#c75450;"></div>
<div style="left:2927px;top:105px;width:8px;height:8px;background:#3c3f41;"></div>
<div style="left:2927.80px;top:104.57px;font:13.5px/13.5px 'Liberation Sans', sans-serif;color:#d8d8d8;white-space:pre;-webkit-text-stroke:0.35px currentColor;">2</div>
<div style="left:2956px;top:82px;width:2px;height:40px;background:#555758;"></div>
<div style="left:2975.50px;top:91.82px;font:21.6px/21.6px 'Liberation Sans', sans-serif;color:#bbbbbb;white-space:pre;-webkit-text-stroke:0.35px currentColor;">Git:</div>
<svg style="left:3036px;top:89px;" width="26" height="26" viewBox="0 0 26 26"><path d="M23 2 L4 21" stroke="#3592c4" stroke-width="3.2"/><path d="M2 9 V23 H16 Z" fill="#3592c4"/></svg>
<svg style="left:3087px;top:89px;" width="30" height="25" viewBox="0 0 30 25"><path d="M2 12 L10 20 L27 3" stroke="#499c54" stroke-width="4.3" fill="none"/></svg>
<svg style="left:3139px;top:89px;" width="26" height="26" viewBox="0 0 26 26"><path d="M2 23 L21 4" stroke="#499c54" stroke-width="3.2"/><path d="M9 2 H23 V16 Z" fill="#499c54"/></svg>
<svg style="left:3189px;top:87px;" width="30" height="30" viewBox="0 0 30 30"><circle cx="15" cy="15" r="12.5" stroke="#afb1b3" stroke-width="3" fill="none"/><path d="M14.5 8 V16 L19.5 20" stroke="#afb1b3" stroke-width="3.2" fill="none"/></svg>
<svg style="left:3243px;top:87px;" width="30" height="30" viewBox="0 0 30 30"><path d="M7 9.5 H17 C22 9.5 25.5 13 25.5 17.5 C25.5 22 22 25.5 17 25.5 H9" stroke="#afb1b3" stroke-width="3.6" fill="none"/><path d="M0.5 9.5 L9 1.5 V17.5 Z" fill="#afb1b3"/></svg>
<div style="left:3288px;top:82px;width:2px;height:40px;background:#555758;"></div>
<svg style="left:3306px;top:87px;" width="34" height="32" viewBox="0 0 34 32"><circle cx="13.3" cy="12.5" r="9.3" stroke="#afb1b3" stroke-width="4.2" fill="none"/><path d="M20 20.5 L28.6 27.8" stroke="#afb1b3" stroke-width="4.6"/></svg>
<svg style="left:3357px;top:86px;" width="34" height="34" viewBox="0 0 34 34"><circle cx="17" cy="17" r="16.2" fill="#f0a732"/><path d="M17 26 V11" stroke="#fff" stroke-width="3"/><path d="M10 16 L17 8 L24 16 Z" fill="#fff"/></svg>
<svg style="left:3410px;top:86px;" width="32" height="32" viewBox="0 0 32 32"><defs><linearGradient id="jbl" x1="0" y1="0" x2="0" y2="1"><stop offset="0" stop-color="#f7f64a"/><stop offset="0.45" stop-color="#9fe07e"/><stop offset="1" stop-color="#22c6ee"/></linearGradient><linearGradient id="jbr" x1="0" y1="0" x2="1" y2="0.6"><stop offset="0" stop-color="#22d38a"/><stop offset="1" stop-color="#1a8ff0"/></linearGradient></defs><path d="M4.7 2 Q20 4 29.8 13.9 L18.6 14.2 Q14 6 4.7 2 Z" fill="url(#jbr)"/><path d="M18.6 14.2 L29.8 13.9 Q20 24 7.5 29.9 Q16 22 18.6 14.2 Z" fill="#1f5ccc"/><path d="M4.7 2 Q14 6 18.6 14.2 Q16 22 7.5 29.9 Q1 16 4.7 2 Z" fill="url(#jbl)"/></svg>
<div style="left:354px;top:132px;width:284px;height:54px;background:#4e5254;"></div>
<svg style="left:372px;top:143.5px;" width="28" height="28" viewBox="0 0 28 28"><circle cx="14" cy="14" r="14" fill="#3e86a0"/><path d="M18.3 10.2 A5.4 5.4 0 1 0 18.3 17.8" stroke="#1f2e36" stroke-width="1.9" fill="none"/></svg>
<div style="left:409.50px;top:147.68px;font:22px/22px 'Liberation Sans', sans-serif;color:#6897bb;white-space:pre;-webkit-text-stroke:0.35px currentColor;">MinFourHeap.java</div>
<svg style="left:606px;top:150.5px;" width="16" height="16" viewBox="0 0 16 16"><path d="M1.5 1.5 L14.5 14.5 M14.5 1.5 L1.5 14.5" stroke="#7b7e80" stroke-width="1.8"/></svg>
<svg style="left:654px;top:143.5px;" width="28" height="28" viewBox="0 0 28 28"><circle cx="14" cy="14" r="14" fill="#3e86a0"/><path d="M18.3 10.2 A5.4 5.4 0 1 0 18.3 17.8" stroke="#1f2e36" stroke-width="1.9" fill="none"/></svg>
<div style="left:691.50px;top:147.68px;font:22px/22px 'Liberation Sans', sans-serif;color:#629755;white-space:pre;-webkit-text-stroke:0.35px currentColor;">ChainingHashDictionary.java</div>
<svg style="left:995.6px;top:150.5px;" width="16" height="16" viewBox="0 0 16 16"><path d="M1.5 1.5 L14.5 14.5 M14.5 1.5 L1.5 14.5" stroke="#7b7e80" stroke-width="1.8"/></svg>
<svg style="left:1044.5px;top:143.5px;" width="28" height="28" viewBox="0 0 28 28"><circle cx="14" cy="14" r="14" fill="#3e86a0"/><path d="M18.3 10.2 A5.4 5.4 0 1 0 18.3 17.8" stroke="#1f2e36" stroke-width="1.9" fill="none"/></svg>
<div style="left:1082.00px;top:147.68px;font:22px/22px 'Liberation Sans', sans-serif;color:#6897bb;white-space:pre;-webkit-text-stroke:0.35px currentColor;">TopKSort.java</div>
<svg style="left:1237.8px;top:150.5px;" width="16" height="16" viewBox="0 0 16 16"><path d="M1.5 1.5 L14.5 14.5 M14.5 1.5 L1.5 14.5" stroke="#7b7e80" stroke-width="1.8"/></svg>
<div style="left:1268px;top:132px;width:296px;height:54px;background:#3d423f;"></div>
<svg style="left:1285.5px;top:143.5px;" width="28" height="28" viewBox="0 0 28 28"><circle cx="14" cy="14" r="14" fill="#3e86a0"/><path d="M18.3 10.2 A5.4 5.4 0 1 0 18.3 17.8" stroke="#1f2e36" stroke-width="1.9" fill="none"/></svg>
<svg style="left:1297.5px;top:142px;" width="20" height="16" viewBox="0 0 20 16"><path d="M6 1 L0 7 L6 13 Z" fill="#e66d2e"/><path d="M9 1 L15 7 L9 13 Z" fill="#59a869"/></svg>
<div style="left:1324.30px;top:147.68px;font:22px/22px 'Liberation Sans', sans-serif;color:#bbbbbb;white-space:pre;-webkit-text-stroke:0.35px currentColor;">TopKSortTests.java</div>
<svg style="left:1532px;top:150.5px;" width="16" height="16" viewBox="0 0 16 16"><path d="M1.5 1.5 L14.5 14.5 M14.5 1.5 L1.5 14.5" stroke="#7b7e80" stroke-width="1.8"/></svg>
<svg style="left:1580px;top:143.5px;" width="28" height="28" viewBox="0 0 28 28"><circle cx="14" cy="14" r="14" fill="#3e86a0"/><path d="M18.3 10.2 A5.4 5.4 0 1 0 18.3 17.8" stroke="#1f2e36" stroke-width="1.9" fill="none"/></svg>
<div style="left:1617.40px;top:147.68px;font:22px/22px 'Liberation Sans', sans-serif;color:#6897bb;white-space:pre;-webkit-text-stroke:0.35px currentColor;">NGramMap.java</div>
<svg style="left:1794px;top:150.5px;" width="16" height="16" viewBox="0 0 16 16"><path d="M1.5 1.5 L14.5 14.5 M14.5 1.5 L1.5 14.5" stroke="#7b7e80" stroke-width="1.8"/></svg>
<svg style="left:1842px;top:143.5px;" width="28" height="28" viewBox="0 0 28 28"><circle cx="14" cy="14" r="14" fill="#53864a"/><path d="M10.5 8 H17.5 M14 8 V20 M10.5 20 H17.5" stroke="#1e2325" stroke-width="2.2" fill="none"/></svg>
<div style="left:1879.60px;top:147.68px;font:22px/22px 'Liberation Sans', sans-serif;color:#bbbbbb;white-space:pre;-webkit-text-stroke:0.35px currentColor;">IDictionary.java</div>
<svg style="left:2047.8000000000002px;top:150.5px;" width="16" height="16" viewBox="0 0 16 16"><path d="M1.5 1.5 L14.5 14.5 M14.5 1.5 L1.5 14.5" stroke="#7b7e80" stroke-width="1.8"/></svg>
<svg style="left:2095.8px;top:143.5px;" width="28" height="28" viewBox="0 0 28 28"><circle cx="14" cy="14" r="14" fill="#53864a"/><path d="M10.5 8 H17.5 M14 8 V20 M10.5 20 H17.5" stroke="#1e2325" stroke-width="2.2" fill="none"/></svg>
<div style="left:2133.70px;top:147.68px;font:22px/22px 'Liberation Sans', sans-serif;color:#bbbbbb;white-space:pre;-webkit-text-stroke:0.35px currentColor;">ICollection.java</div>
<svg style="left:2302px;top:150.5px;" width="16" height="16" viewBox="0 0 16 16"><path d="M1.5 1.5 L14.5 14.5 M14.5 1.5 L1.5 14.5" stroke="#7b7e80" stroke-width="1.8"/></svg>
<svg style="left:2350px;top:143.5px;" width="28" height="28" viewBox="0 0 28 28"><circle cx="14" cy="14" r="14" fill="#53864a"/><path d="M10.5 8 H17.5 M14 8 V20 M10.5 20 H17.5" stroke="#1e2325" stroke-width="2.2" fill="none"/></svg>
<div style="left:2387.50px;top:147.68px;font:22px/22px 'Liberation Sans', sans-serif;color:#bbbbbb;white-space:pre;-webkit-text-stroke:0.35px currentColor;">IQueue.java</div>
<svg style="left:2521px;top:150.5px;" width="16" height="16" viewBox="0 0 16 16"><path d="M1.5 1.5 L14.5 14.5 M14.5 1.5 L1.5 14.5" stroke="#7b7e80" stroke-width="1.8"/></svg>
<div style="left:2552px;top:132px;width:336px;height:54px;background:#3d423f;"></div>
<svg style="left:2570px;top:143.5px;" width="28" height="28" viewBox="0 0 28 28"><circle cx="14" cy="14" r="14" fill="#3e86a0"/><path d="M18.3 10.2 A5.4 5.4 0 1 0 18.3 17.8" stroke="#1f2e36" stroke-width="1.9" fill="none"/></svg>
<svg style="left:2582px;top:142px;" width="20" height="16" viewBox="0 0 20 16"><path d="M6 1 L0 7 L6 13 Z" fill="#e66d2e"/><path d="M9 1 L15 7 L9 13 Z" fill="#59a869"/></svg>
<div style="left:2608.00px;top:147.68px;font:22px/22px 'Liberation Sans', sans-serif;color:#bbbbbb;white-space:pre;-webkit-text-stroke:0.35px currentColor;">MinFourHeapTests.java</div>
<svg style="left:2855.7px;top:150.5px;" width="16" height="16" viewBox="0 0 16 16"><path d="M1.5 1.5 L14.5 14.5 M14.5 1.5 L1.5 14.5" stroke="#7b7e80" stroke-width="1.8"/></svg>
<svg style="left:2903.7px;top:143.5px;" width="28" height="28" viewBox="0 0 28 28"><circle cx="14" cy="14" r="14" fill="#3e86a0"/><path d="M18.3 10.2 A5.4 5.4 0 1 0 18.3 17.8" stroke="#1f2e36" stroke-width="1.9" fill="none"/></svg>
<div style="left:2941.40px;top:147.68px;font:22px/22px 'Liberation Sans', sans-serif;color:#6897bb;white-space:pre;-webkit-text-stroke:0.35px currentColor;">SpellingCorrector.java</div>
<svg style="left:3180px;top:150.5px;" width="16" height="16" viewBox="0 0 16 16"><path d="M1.5 1.5 L14.5 14.5 M14.5 1.5 L1.5 14.5" stroke="#7b7e80" stroke-width="1.8"/></svg>
<div style="left:354px;top:180px;width:284px;height:6px;background:#4a88c7;"></div>
<svg style="left:1618px;top:171px;" width="162" height="6" viewBox="0 0 162 6"><path d="M0 4 L3.5 1 L7.0 4 L10.5 1 L14.0 4 L17.5 1 L21.0 4 L24.5 1 L28.0 4 L31.5 1 L35.0 4 L38.5 1 L42.0 4 L45.5 1 L49.0 4 L52.5 1 L56.0 4 L59.5 1 L63.0 4 L66.5 1 L70.0 4 L73.5 1 L77.0 4 L80.5 1 L84.0 4 L87.5 1 L91.0 4 L94.5 1 L98.0 4 L101.5 1 L105.0 4 L108.5 1 L112.0 4 L115.5 1 L119.0 4 L122.5 1 L126.0 4 L129.5 1 L133.0 4 L136.5 1 L140.0 4 L143.5 1 L147.0 4 L150.5 1 L154.0 4 L157.5 1" stroke="#bc3f3c" stroke-width="1.4" fill="none"/></svg>
<svg style="left:3424px;top:142px;" width="16" height="34" viewBox="0 0 16 34"><circle cx="8" cy="6.5" r="3.3" fill="#afb1b3"/><circle cx="8" cy="16.5" r="3.3" fill="#afb1b3"/><circle cx="8" cy="26.5" r="3.3" fill="#afb1b3"/></svg>
<svg style="left:3261px;top:199px;" width="26" height="24" viewBox="0 0 26 24"><path d="M12.5 1 L25 23 H0 Z" fill="#c9a022"/><path d="M12.5 8 V14 M12.5 16.5 V20" stroke="#2b2b2b" stroke-width="3"/></svg>
<div style="left:3292.00px;top:201.58px;font:22px/22px 'Liberation Sans', sans-serif;color:#bbbbbb;white-space:pre;-webkit-text-stroke:0.35px currentColor;">7</div>
<svg style="left:3319px;top:199px;" width="26" height="24" viewBox="0 0 26 24"><path d="M12.5 1 L25 23 H0 Z" fill="#7f7a62"/><path d="M12.5 8 V14 M12.5 16.5 V20" stroke="#2b2b2b" stroke-width="3"/></svg>
<div style="left:3349.00px;top:201.58px;font:22px/22px 'Liberation Sans', sans-serif;color:#bbbbbb;white-space:pre;-webkit-text-stroke:0.35px currentColor;">1</div>
<svg style="left:3380px;top:203px;" width="20" height="16" viewBox="0 0 20 16"><path d="M2 12 L10 4 L18 12" stroke="#afb1b3" stroke-width="2.4" fill="none"/></svg>
<svg style="left:3422px;top:205px;" width="20" height="16" viewBox="0 0 20 16"><path d="M2 3 L10 11 L18 3" stroke="#afb1b3" stroke-width="2.4" fill="none"/></svg>
<div style="left:3428px;top:372px;width:28px;height:4px;background:#c9a022;"></div>
<div style="left:3428px;top:384px;width:28px;height:4px;background:#c9a022;"></div>
<div style="left:3428px;top:456px;width:28px;height:4px;background:#c9a022;"></div>
<div style="left:3428px;top:1386px;width:28px;height:4px;background:#c9a022;"></div>
<div style="left:3428px;top:1396px;width:28px;height:4px;background:#c9a022;"></div>
<div style="left:3428px;top:2066px;width:28px;height:4px;background:#c9a022;"></div>
<div style="left:3428px;top:1451px;width:28px;height:4px;background:#7f7a62;"></div>
<div style="left:3420px;top:382px;width:4px;height:10px;background:#4a7152;"></div>
<div style="left:3420px;top:498px;width:4px;height:638px;background:#4a7152;"></div>
<div style="left:3420px;top:1930px;width:4px;height:20px;background:#4a7152;"></div>
<div style="left:3420px;top:1166px;width:4px;height:32px;background:#3b5f80;"></div>
<div style="left:3420px;top:1250px;width:4px;height:32px;background:#3b5f80;"></div>
<div style="left:3420px;top:1334px;width:4px;height:240px;background:#3b5f80;"></div>
<div style="left:3420px;top:1626px;width:4px;height:252px;background:#3b5f80;"></div>
<div style="left:3420px;top:2012px;width:4px;height:10px;background:#3b5f80;"></div>
<div style="left:3436px;top:1216px;width:14px;height:459px;background:rgba(140,140,140,0.42);border-radius:7px"></div>
<div style="left:74.00px;top:172.14px;font:27px/27px 'Liberation Sans', sans-serif;color:#bbbbbb;white-space:pre;-webkit-text-stroke:0.35px currentColor;">data</div>
<svg style="left:42px;top:178px;" width="24" height="12" viewBox="0 0 24 12"><rect x="0" y="0" width="24" height="12" fill="#87939a"/></svg>
<div style="left:42px;top:132px;width:310px;height:52px;background:#3c3f41;"></div>
<div style="left:42px;top:184px;width:310px;height:2px;background:#323232;"></div>
<svg style="left:67px;top:145px;" width="30" height="28" viewBox="0 0 30 28"><rect x="1" y="1" width="28" height="26" fill="#8e9aa2"/><rect x="3" y="7" width="24" height="18" fill="#3c3f41"/><rect x="5" y="9" width="20" height="14" fill="#3d8aa6"/></svg>
<div style="left:108px;top:164.3px;width:4px;height:4px;background:#afb1b3;border-radius:50%"></div>
<div style="left:116px;top:164.3px;width:4px;height:4px;background:#afb1b3;border-radius:50%"></div>
<div style="left:123.5px;top:164.3px;width:4px;height:4px;background:#afb1b3;border-radius:50%"></div>
<svg style="left:128px;top:155px;" width="20" height="12" viewBox="0 0 20 12"><path d="M0.5 0.5 H19 L9.75 11 Z" fill="#afb1b3"/></svg>
<svg style="left:171px;top:143px;" width="30" height="30" viewBox="0 0 30 30"><circle cx="15" cy="15" r="12.5" stroke="#afb1b3" stroke-width="3" fill="none"/><path d="M15 2 V11 M15 19 V28 M2 15 H11 M19 15 H28" stroke="#afb1b3" stroke-width="3"/></svg>
<svg style="left:225px;top:143px;" width="27" height="30" viewBox="0 0 27 30"><path d="M1 3 H25 M1 27 H25" stroke="#afb1b3" stroke-width="4"/><path d="M6 13 L13 7 L20 13 Z M6 16.5 L13 23 L20 16.5 Z" fill="#afb1b3"/></svg>
<svg style="left:277px;top:144px;" width="27" height="28" viewBox="0 0 27 28"><path d="M1 14 H25" stroke="#afb1b3" stroke-width="4.3"/><path d="M6 1.5 H20 L13 9 Z M6 26 H20 L13 18.5 Z" fill="#afb1b3"/></svg>
<div style="left:322px;top:138px;width:2px;height:40px;background:#555758;"></div>
<svg style="left:343px;top:148px;" width="9" height="20" viewBox="0 0 9 20"><circle cx="7.5" cy="10" r="6.5" fill="#afb1b3"/><rect x="3.5" y="0" width="6" height="4" fill="#afb1b3"/><rect x="3.5" y="16" width="6" height="4" fill="#afb1b3"/><rect x="0" y="7" width="4" height="6" fill="#afb1b3"/><circle cx="8" cy="10" r="2.6" fill="#3c3f41"/></svg>
<div style="left:42px;top:402px;width:310px;height:40px;background:#4d4a3d;"></div>
<div style="left:42px;top:482px;width:310px;height:40px;background:#0d293e;"></div>
<div style="left:42px;top:1882px;width:310px;height:40px;background:#49544a;"></div>
<svg style="left:42px;top:214px;" width="12" height="18" viewBox="0 0 12 18"><path d="M2 1.5 L9 8.5 L2 15.5" stroke="#afb1b3" stroke-width="2.2" fill="none"/></svg>
<svg style="left:74px;top:211px;overflow:hidden" width="28" height="22" viewBox="0 0 28 22"><path d="M0 0 H11 L14 4 H28 V22 H0 Z" fill="#87939a"/></svg>
<div style="left:110.00px;top:208.50px;font:28px/28px 'Liberation Sans', sans-serif;color:#bbbbbb;white-space:pre;-webkit-text-stroke:0.35px currentColor;width:241px;overflow:hidden;">possible_correction</div>
<svg style="left:78px;top:248px;" width="22" height="28" viewBox="0 0 22 28"><path d="M0 8.1 L8.1 0 V8.1 Z" fill="#8e9aa2"/><path d="M9.9 0 H20.1 V27.9 H0 V9.9 H9.9 Z" fill="#8e9aa2"/><path d="M4.2 12.8 H16.1 M4.2 16.8 H16.1 M4.2 20.6 H12.1" stroke="#3c3f41" stroke-width="1.6"/></svg>
<div style="left:110.00px;top:248.50px;font:28px/28px 'Liberation Sans', sans-serif;color:#bbbbbb;white-space:pre;-webkit-text-stroke:0.35px currentColor;width:241px;overflow:hidden;">alice</div>
<svg style="left:78px;top:288px;" width="22" height="28" viewBox="0 0 22 28"><path d="M0 8.1 L8.1 0 V8.1 Z" fill="#8e9aa2"/><path d="M9.9 0 H20.1 V27.9 H0 V9.9 H9.9 Z" fill="#8e9aa2"/><path d="M4.2 12.8 H16.1 M4.2 16.8 H16.1 M4.2 20.6 H12.1" stroke="#3c3f41" stroke-width="1.6"/></svg>
<div style="left:110.00px;top:288.50px;font:28px/28px 'Liberation Sans', sans-serif;color:#bbbbbb;white-space:pre;-webkit-text-stroke:0.35px currentColor;width:241px;overflow:hidden;">best_corrections</div>
<svg style="left:78px;top:328px;" width="22" height="28" viewBox="0 0 22 28"><path d="M0 8.1 L8.1 0 V8.1 Z" fill="#8e9aa2"/><path d="M9.9 0 H20.1 V27.9 H0 V9.9 H9.9 Z" fill="#8e9aa2"/><path d="M4.2 12.8 H16.1 M4.2 16.8 H16.1 M4.2 20.6 H12.1" stroke="#3c3f41" stroke-width="1.6"/></svg>
<div style="left:110.00px;top:328.50px;font:28px/28px 'Liberation Sans', sans-serif;color:#bbbbbb;white-space:pre;-webkit-text-stroke:0.35px currentColor;width:241px;overflow:hidden;">dictionary.txt</div>
<svg style="left:78px;top:368px;" width="22" height="28" viewBox="0 0 22 28"><path d="M0 8.1 L8.1 0 V8.1 Z" fill="#8e9aa2"/><path d="M9.9 0 H20.1 V27.9 H0 V9.9 H9.9 Z" fill="#8e9aa2"/><path d="M4.2 12.8 H16.1 M4.2 16.8 H16.1 M4.2 20.6 H12.1" stroke="#3c3f41" stroke-width="1.6"/></svg>
<div style="left:110.00px;top:368.50px;font:28px/28px 'Liberation Sans', sans-serif;color:#bbbbbb;white-space:pre;-webkit-text-stroke:0.35px currentColor;width:241px;overflow:hidden;">edit_distance_test</div>
<svg style="left:38px;top:411px;overflow:hidden" width="28" height="22" viewBox="0 0 28 22"><path d="M0 0 H11 L14 4 H28 V22 H0 Z" fill="#c0652f"/></svg>
<div style="left:74.00px;top:408.50px;font:28px/28px 'Liberation Sans', sans-serif;color:#a5a52c;white-space:pre;-webkit-text-stroke:0.35px currentColor;width:277px;overflow:hidden;">out</div>
<svg style="left:38px;top:451px;overflow:hidden" width="28" height="22" viewBox="0 0 28 22"><path d="M0 0 H11 L14 4 H28 V22 H0 Z" fill="#3d8eb5"/></svg>
<div style="left:74.00px;top:448.50px;font:28px/28px 'Liberation Sans', sans-serif;color:#bbbbbb;white-space:pre;-webkit-text-stroke:0.35px currentColor;width:277px;overflow:hidden;">src</div>
<svg style="left:75px;top:475.2px;" width="39" height="6" viewBox="0 0 39 6"><path d="M0 4 L3.5 1 L7.0 4 L10.5 1 L14.0 4 L17.5 1 L21.0 4 L24.5 1 L28.0 4 L31.5 1 L35.0 4" stroke="#bc3f3c" stroke-width="1.4" fill="none"/></svg>
<svg style="left:39px;top:496px;" width="16" height="12" viewBox="0 0 16 12"><path d="M1.5 2 L7.5 9 L13.5 2" stroke="#afb1b3" stroke-width="2.2" fill="none"/></svg>
<svg style="left:74px;top:491px;overflow:hidden" width="28" height="22" viewBox="0 0 28 22"><path d="M0 0 H11 L14 4 H28 V22 H0 Z" fill="#87939a"/><circle cx="10" cy="13" r="3.6" fill="#2b2b2b"/></svg>
<div style="left:110.00px;top:488.50px;font:28px/28px 'Liberation Sans', sans-serif;color:#bbbbbb;white-space:pre;-webkit-text-stroke:0.35px currentColor;width:241px;overflow:hidden;">beaverchat</div>
<svg style="left:78px;top:534px;" width="12" height="18" viewBox="0 0 12 18"><path d="M2 1.5 L9 8.5 L2 15.5" stroke="#afb1b3" stroke-width="2.2" fill="none"/></svg>
<svg style="left:110px;top:531px;overflow:hidden" width="28" height="22" viewBox="0 0 28 22"><path d="M0 0 H11 L14 4 H28 V22 H0 Z" fill="#87939a"/><circle cx="10" cy="13" r="3.6" fill="#2b2b2b"/></svg>
<div style="left:146.00px;top:528.50px;font:28px/28px 'Liberation Sans', sans-serif;color:#bbbbbb;white-space:pre;-webkit-text-stroke:0.35px currentColor;width:205px;overflow:hidden;">css</div>
<svg style="left:78px;top:574px;" width="12" height="18" viewBox="0 0 12 18"><path d="M2 1.5 L9 8.5 L2 15.5" stroke="#afb1b3" stroke-width="2.2" fill="none"/></svg>
<svg style="left:110px;top:571px;overflow:hidden" width="28" height="22" viewBox="0 0 28 22"><path d="M0 0 H11 L14 4 H28 V22 H0 Z" fill="#87939a"/><circle cx="10" cy="13" r="3.6" fill="#2b2b2b"/></svg>
<div style="left:146.00px;top:568.50px;font:28px/28px 'Liberation Sans', sans-serif;color:#bbbbbb;white-space:pre;-webkit-text-stroke:0.35px currentColor;width:205px;overflow:hidden;">html</div>
<svg style="left:78px;top:614px;" width="12" height="18" viewBox="0 0 12 18"><path d="M2 1.5 L9 8.5 L2 15.5" stroke="#afb1b3" stroke-width="2.2" fill="none"/></svg>
<svg style="left:110px;top:611px;overflow:hidden" width="28" height="22" viewBox="0 0 28 22"><path d="M0 0 H11 L14 4 H28 V22 H0 Z" fill="#87939a"/><circle cx="10" cy="13" r="3.6" fill="#2b2b2b"/></svg>
<div style="left:146.00px;top:608.50px;font:28px/28px 'Liberation Sans', sans-serif;color:#bbbbbb;white-space:pre;-webkit-text-stroke:0.35px currentColor;width:205px;overflow:hidden;">js</div>
<svg style="left:110px;top:648px;" width="28" height="28" viewBox="0 0 28 28"><circle cx="14" cy="14" r="14" fill="#3e86a0"/><path d="M18.3 10.2 A5.4 5.4 0 1 0 18.3 17.8" stroke="#1f2e36" stroke-width="1.9" fill="none"/></svg>
<div style="left:146.00px;top:648.50px;font:28px/28px 'Liberation Sans', sans-serif;color:#bbbbbb;white-space:pre;-webkit-text-stroke:0.35px currentColor;width:205px;overflow:hidden;">Chat</div>
<svg style="left:110px;top:688px;" width="28" height="28" viewBox="0 0 28 28"><circle cx="14" cy="14" r="14" fill="#3e86a0"/><path d="M18.3 10.2 A5.4 5.4 0 1 0 18.3 17.8" stroke="#1f2e36" stroke-width="1.9" fill="none"/></svg>
<div style="left:146.00px;top:688.50px;font:28px/28px 'Liberation Sans', sans-serif;color:#bbbbbb;white-space:pre;-webkit-text-stroke:0.35px currentColor;width:205px;overflow:hidden;">IRCCodes</div>
<svg style="left:110px;top:728px;" width="28" height="28" viewBox="0 0 28 28"><circle cx="14" cy="14" r="14" fill="#3e86a0"/><path d="M18.3 10.2 A5.4 5.4 0 1 0 18.3 17.8" stroke="#1f2e36" stroke-width="1.9" fill="none"/></svg>
<svg style="left:129px;top:725px;" width="12" height="14" viewBox="0 0 12 14"><path d="M1 1 L11 7 L1 13 Z" fill="#59a869"/></svg>
<div style="left:146.00px;top:728.50px;font:28px/28px 'Liberation Sans', sans-serif;color:#bbbbbb;white-space:pre;-webkit-text-stroke:0.35px currentColor;width:205px;overflow:hidden;">Main</div>
<svg style="left:110px;top:768px;" width="28" height="28" viewBox="0 0 28 28"><circle cx="14" cy="14" r="14" fill="#3e86a0"/><path d="M18.3 10.2 A5.4 5.4 0 1 0 18.3 17.8" stroke="#1f2e36" stroke-width="1.9" fill="none"/></svg>
<div style="left:146.00px;top:768.50px;font:28px/28px 'Liberation Sans', sans-serif;color:#bbbbbb;white-space:pre;-webkit-text-stroke:0.35px currentColor;width:205px;overflow:hidden;">ServerConnection</div>
<svg style="left:39px;top:816px;" width="16" height="12" viewBox="0 0 16 12"><path d="M1.5 2 L7.5 9 L13.5 2" stroke="#afb1b3" stroke-width="2.2" fill="none"/></svg>
<svg style="left:74px;top:811px;overflow:hidden" width="28" height="22" viewBox="0 0 28 22"><path d="M0 0 H11 L14 4 H28 V22 H0 Z" fill="#87939a"/><circle cx="10" cy="13" r="3.6" fill="#2b2b2b"/></svg>
<div style="left:110.00px;top:808.50px;font:28px/28px 'Liberation Sans', sans-serif;color:#bbbbbb;white-space:pre;-webkit-text-stroke:0.35px currentColor;width:241px;overflow:hidden;">edu.caltech.cs2</div>
<svg style="left:111px;top:835.2px;" width="196" height="6" viewBox="0 0 196 6"><path d="M0 4 L3.5 1 L7.0 4 L10.5 1 L14.0 4 L17.5 1 L21.0 4 L24.5 1 L28.0 4 L31.5 1 L35.0 4 L38.5 1 L42.0 4 L45.5 1 L49.0 4 L52.5 1 L56.0 4 L59.5 1 L63.0 4 L66.5 1 L70.0 4 L73.5 1 L77.0 4 L80.5 1 L84.0 4 L87.5 1 L91.0 4 L94.5 1 L98.0 4 L101.5 1 L105.0 4 L108.5 1 L112.0 4 L115.5 1 L119.0 4 L122.5 1 L126.0 4 L129.5 1 L133.0 4 L136.5 1 L140.0 4 L143.5 1 L147.0 4 L150.5 1 L154.0 4 L157.5 1 L161.0 4 L164.5 1 L168.0 4 L171.5 1 L175.0 4 L178.5 1 L182.0 4 L185.5 1 L189.0 4 L192.5 1" stroke="#bc3f3c" stroke-width="1.4" fill="none"/></svg>
<svg style="left:75px;top:856px;" width="16" height="12" viewBox="0 0 16 12"><path d="M1.5 2 L7.5 9 L13.5 2" stroke="#afb1b3" stroke-width="2.2" fill="none"/></svg>
<svg style="left:110px;top:851px;overflow:hidden" width="28" height="22" viewBox="0 0 28 22"><path d="M0 0 H11 L14 4 H28 V22 H0 Z" fill="#87939a"/><circle cx="10" cy="13" r="3.6" fill="#2b2b2b"/></svg>
<div style="left:146.00px;top:848.50px;font:28px/28px 'Liberation Sans', sans-serif;color:#bbbbbb;white-space:pre;-webkit-text-stroke:0.35px currentColor;width:205px;overflow:hidden;">datastructures</div>
<svg style="left:147px;top:875.2px;" width="179" height="6" viewBox="0 0 179 6"><path d="M0 4 L3.5 1 L7.0 4 L10.5 1 L14.0 4 L17.5 1 L21.0 4 L24.5 1 L28.0 4 L31.5 1 L35.0 4 L38.5 1 L42.0 4 L45.5 1 L49.0 4 L52.5 1 L56.0 4 L59.5 1 L63.0 4 L66.5 1 L70.0 4 L73.5 1 L77.0 4 L80.5 1 L84.0 4 L87.5 1 L91.0 4 L94.5 1 L98.0 4 L101.5 1 L105.0 4 L108.5 1 L112.0 4 L115.5 1 L119.0 4 L122.5 1 L126.0 4 L129.5 1 L133.0 4 L136.5 1 L140.0 4 L143.5 1 L147.0 4 L150.5 1 L154.0 4 L157.5 1 L161.0 4 L164.5 1 L168.0 4 L171.5 1 L175.0 4" stroke="#bc3f3c" stroke-width="1.4" fill="none"/></svg>
<svg style="left:146px;top:888px;" width="28" height="28" viewBox="0 0 28 28"><circle cx="14" cy="14" r="14" fill="#3e86a0"/><path d="M18.3 10.2 A5.4 5.4 0 1 0 18.3 17.8" stroke="#1f2e36" stroke-width="1.9" fill="none"/></svg>
<div style="left:182.00px;top:888.50px;font:28px/28px 'Liberation Sans', sans-serif;color:#629755;white-space:pre;-webkit-text-stroke:0.35px currentColor;width:169px;overflow:hidden;">ArrayDeque</div>
<svg style="left:146px;top:928px;" width="28" height="28" viewBox="0 0 28 28"><circle cx="14" cy="14" r="14" fill="#3e86a0"/><path d="M18.3 10.2 A5.4 5.4 0 1 0 18.3 17.8" stroke="#1f2e36" stroke-width="1.9" fill="none"/></svg>
<div style="left:182.00px;top:928.50px;font:28px/28px 'Liberation Sans', sans-serif;color:#629755;white-space:pre;-webkit-text-stroke:0.35px currentColor;width:169px;overflow:hidden;">ChainingHashDictionary</div>
<svg style="left:146px;top:968px;" width="28" height="28" viewBox="0 0 28 28"><circle cx="14" cy="14" r="14" fill="#3e86a0"/><path d="M18.3 10.2 A5.4 5.4 0 1 0 18.3 17.8" stroke="#1f2e36" stroke-width="1.9" fill="none"/></svg>
<div style="left:182.00px;top:968.50px;font:28px/28px 'Liberation Sans', sans-serif;color:#bbbbbb;white-space:pre;-webkit-text-stroke:0.35px currentColor;width:169px;overflow:hidden;">IterableString</div>
<svg style="left:146px;top:1008px;" width="28" height="28" viewBox="0 0 28 28"><circle cx="14" cy="14" r="14" fill="#3e86a0"/><path d="M18.3 10.2 A5.4 5.4 0 1 0 18.3 17.8" stroke="#1f2e36" stroke-width="1.9" fill="none"/></svg>
<div style="left:182.00px;top:1008.50px;font:28px/28px 'Liberation Sans', sans-serif;color:#629755;white-space:pre;-webkit-text-stroke:0.35px currentColor;width:169px;overflow:hidden;">LinkedDeque</div>
<svg style="left:146px;top:1048px;" width="28" height="28" viewBox="0 0 28 28"><circle cx="14" cy="14" r="14" fill="#3e86a0"/><path d="M18.3 10.2 A5.4 5.4 0 1 0 18.3 17.8" stroke="#1f2e36" stroke-width="1.9" fill="none"/></svg>
<div style="left:182.00px;top:1048.50px;font:28px/28px 'Liberation Sans', sans-serif;color:#6897bb;white-space:pre;-webkit-text-stroke:0.35px currentColor;width:169px;overflow:hidden;">MinFourHeap</div>
<svg style="left:146px;top:1088px;" width="28" height="28" viewBox="0 0 28 28"><circle cx="14" cy="14" r="14" fill="#3e86a0"/><path d="M18.3 10.2 A5.4 5.4 0 1 0 18.3 17.8" stroke="#1f2e36" stroke-width="1.9" fill="none"/></svg>
<div style="left:182.00px;top:1088.50px;font:28px/28px 'Liberation Sans', sans-serif;color:#629755;white-space:pre;-webkit-text-stroke:0.35px currentColor;width:169px;overflow:hidden;">MoveToFrontDictionary</div>
<svg style="left:146px;top:1128px;" width="28" height="28" viewBox="0 0 28 28"><circle cx="14" cy="14" r="14" fill="#3e86a0"/><path d="M18.3 10.2 A5.4 5.4 0 1 0 18.3 17.8" stroke="#1f2e36" stroke-width="1.9" fill="none"/></svg>
<div style="left:182.00px;top:1128.50px;font:28px/28px 'Liberation Sans', sans-serif;color:#6897bb;white-space:pre;-webkit-text-stroke:0.35px currentColor;width:169px;overflow:hidden;">NGramMap</div>
<svg style="left:183px;top:1155.2px;" width="146" height="6" viewBox="0 0 146 6"><path d="M0 4 L3.5 1 L7.0 4 L10.5 1 L14.0 4 L17.5 1 L21.0 4 L24.5 1 L28.0 4 L31.5 1 L35.0 4 L38.5 1 L42.0 4 L45.5 1 L49.0 4 L52.5 1 L56.0 4 L59.5 1 L63.0 4 L66.5 1 L70.0 4 L73.5 1 L77.0 4 L80.5 1 L84.0 4 L87.5 1 L91.0 4 L94.5 1 L98.0 4 L101.5 1 L105.0 4 L108.5 1 L112.0 4 L115.5 1 L119.0 4 L122.5 1 L126.0 4 L129.5 1 L133.0 4 L136.5 1 L140.0 4 L143.5 1" stroke="#bc3f3c" stroke-width="1.4" fill="none"/></svg>
<svg style="left:146px;top:1168px;" width="28" height="28" viewBox="0 0 28 28"><circle cx="14" cy="14" r="14" fill="#3e86a0"/><path d="M18.3 10.2 A5.4 5.4 0 1 0 18.3 17.8" stroke="#1f2e36" stroke-width="1.9" fill="none"/></svg>
<div style="left:182.00px;top:1168.50px;font:28px/28px 'Liberation Sans', sans-serif;color:#629755;white-space:pre;-webkit-text-stroke:0.35px currentColor;width:169px;overflow:hidden;">TrieMap</div>
<svg style="left:75px;top:1216px;" width="16" height="12" viewBox="0 0 16 12"><path d="M1.5 2 L7.5 9 L13.5 2" stroke="#afb1b3" stroke-width="2.2" fill="none"/></svg>
<svg style="left:110px;top:1211px;overflow:hidden" width="28" height="22" viewBox="0 0 28 22"><path d="M0 0 H11 L14 4 H28 V22 H0 Z" fill="#87939a"/><circle cx="10" cy="13" r="3.6" fill="#2b2b2b"/></svg>
<div style="left:146.00px;top:1208.50px;font:28px/28px 'Liberation Sans', sans-serif;color:#bbbbbb;white-space:pre;-webkit-text-stroke:0.35px currentColor;width:205px;overflow:hidden;">interfaces</div>
<svg style="left:146px;top:1248px;" width="28" height="28" viewBox="0 0 28 28"><circle cx="14" cy="14" r="14" fill="#53864a"/><path d="M10.5 8 H17.5 M14 8 V20 M10.5 20 H17.5" stroke="#1e2325" stroke-width="2.2" fill="none"/></svg>
<div style="left:182.00px;top:1248.50px;font:28px/28px 'Liberation Sans', sans-serif;color:#bbbbbb;white-space:pre;-webkit-text-stroke:0.35px currentColor;width:169px;overflow:hidden;">ICollection</div>
<svg style="left:146px;top:1288px;" width="28" height="28" viewBox="0 0 28 28"><circle cx="14" cy="14" r="14" fill="#53864a"/><path d="M10.5 8 H17.5 M14 8 V20 M10.5 20 H17.5" stroke="#1e2325" stroke-width="2.2" fill="none"/></svg>
<div style="left:182.00px;top:1288.50px;font:28px/28px 'Liberation Sans', sans-serif;color:#bbbbbb;white-space:pre;-webkit-text-stroke:0.35px currentColor;width:169px;overflow:hidden;">IDeque</div>
<svg style="left:146px;top:1328px;" width="28" height="28" viewBox="0 0 28 28"><circle cx="14" cy="14" r="14" fill="#53864a"/><path d="M10.5 8 H17.5 M14 8 V20 M10.5 20 H17.5" stroke="#1e2325" stroke-width="2.2" fill="none"/></svg>
<div style="left:182.00px;top:1328.50px;font:28px/28px 'Liberation Sans', sans-serif;color:#bbbbbb;white-space:pre;-webkit-text-stroke:0.35px currentColor;width:169px;overflow:hidden;">IDictionary</div>
<svg style="left:146px;top:1368px;" width="28" height="28" viewBox="0 0 28 28"><circle cx="14" cy="14" r="14" fill="#53864a"/><path d="M10.5 8 H17.5 M14 8 V20 M10.5 20 H17.5" stroke="#1e2325" stroke-width="2.2" fill="none"/></svg>
<div style="left:182.00px;top:1368.50px;font:28px/28px 'Liberation Sans', sans-serif;color:#bbbbbb;white-space:pre;-webkit-text-stroke:0.35px currentColor;width:169px;overflow:hidden;">IFixedSizeQueue</div>
<svg style="left:146px;top:1408px;" width="28" height="28" viewBox="0 0 28 28"><circle cx="14" cy="14" r="14" fill="#53864a"/><path d="M10.5 8 H17.5 M14 8 V20 M10.5 20 H17.5" stroke="#1e2325" stroke-width="2.2" fill="none"/></svg>
<div style="left:182.00px;top:1408.50px;font:28px/28px 'Liberation Sans', sans-serif;color:#bbbbbb;white-space:pre;-webkit-text-stroke:0.35px currentColor;width:169px;overflow:hidden;">IPriorityQueue</div>
<svg style="left:146px;top:1448px;" width="28" height="28" viewBox="0 0 28 28"><circle cx="14" cy="14" r="14" fill="#53864a"/><path d="M10.5 8 H17.5 M14 8 V20 M10.5 20 H17.5" stroke="#1e2325" stroke-width="2.2" fill="none"/></svg>
<div style="left:182.00px;top:1448.50px;font:28px/28px 'Liberation Sans', sans-serif;color:#bbbbbb;white-space:pre;-webkit-text-stroke:0.35px currentColor;width:169px;overflow:hidden;">IQueue</div>
<svg style="left:146px;top:1488px;" width="28" height="28" viewBox="0 0 28 28"><circle cx="14" cy="14" r="14" fill="#53864a"/><path d="M10.5 8 H17.5 M14 8 V20 M10.5 20 H17.5" stroke="#1e2325" stroke-width="2.2" fill="none"/></svg>
<div style="left:182.00px;top:1488.50px;font:28px/28px 'Liberation Sans', sans-serif;color:#bbbbbb;white-space:pre;-webkit-text-stroke:0.35px currentColor;width:169px;overflow:hidden;">IStack</div>
<svg style="left:146px;top:1528px;" width="28" height="28" viewBox="0 0 28 28"><circle cx="14" cy="14" r="14" fill="#53864a"/><path d="M10.5 8 H17.5 M14 8 V20 M10.5 20 H17.5" stroke="#1e2325" stroke-width="2.2" fill="none"/></svg>
<div style="left:182.00px;top:1528.50px;font:28px/28px 'Liberation Sans', sans-serif;color:#bbbbbb;white-space:pre;-webkit-text-stroke:0.35px currentColor;width:169px;overflow:hidden;">ITrieMap</div>
<svg style="left:75px;top:1576px;" width="16" height="12" viewBox="0 0 16 12"><path d="M1.5 2 L7.5 9 L13.5 2" stroke="#afb1b3" stroke-width="2.2" fill="none"/></svg>
<svg style="left:110px;top:1571px;overflow:hidden" width="28" height="22" viewBox="0 0 28 22"><path d="M0 0 H11 L14 4 H28 V22 H0 Z" fill="#87939a"/><circle cx="10" cy="13" r="3.6" fill="#2b2b2b"/></svg>
<div style="left:146.00px;top:1568.50px;font:28px/28px 'Liberation Sans', sans-serif;color:#bbbbbb;white-space:pre;-webkit-text-stroke:0.35px currentColor;width:205px;overflow:hidden;">misc</div>
<svg style="left:146px;top:1608px;" width="28" height="28" viewBox="0 0 28 28"><circle cx="14" cy="14" r="14" fill="#3e86a0"/><path d="M18.3 10.2 A5.4 5.4 0 1 0 18.3 17.8" stroke="#1f2e36" stroke-width="1.9" fill="none"/></svg>
<div style="left:182.00px;top:1608.50px;font:28px/28px 'Liberation Sans', sans-serif;color:#bbbbbb;white-space:pre;-webkit-text-stroke:0.35px currentColor;width:169px;overflow:hidden;">CorrectionChecker</div>
<svg style="left:146px;top:1648px;" width="28" height="28" viewBox="0 0 28 28"><circle cx="14" cy="14" r="14" fill="#3e86a0"/><path d="M18.3 10.2 A5.4 5.4 0 1 0 18.3 17.8" stroke="#1f2e36" stroke-width="1.9" fill="none"/></svg>
<div style="left:182.00px;top:1648.50px;font:28px/28px 'Liberation Sans', sans-serif;color:#bbbbbb;white-space:pre;-webkit-text-stroke:0.35px currentColor;width:169px;overflow:hidden;">IntegerComparator</div>
<svg style="left:75px;top:1696px;" width="16" height="12" viewBox="0 0 16 12"><path d="M1.5 2 L7.5 9 L13.5 2" stroke="#afb1b3" stroke-width="2.2" fill="none"/></svg>
<svg style="left:110px;top:1691px;overflow:hidden" width="28" height="22" viewBox="0 0 28 22"><path d="M0 0 H11 L14 4 H28 V22 H0 Z" fill="#87939a"/><circle cx="10" cy="13" r="3.6" fill="#2b2b2b"/></svg>
<div style="left:146.00px;top:1688.50px;font:28px/28px 'Liberation Sans', sans-serif;color:#bbbbbb;white-space:pre;-webkit-text-stroke:0.35px currentColor;width:205px;overflow:hidden;">sorts</div>
<svg style="left:146px;top:1728px;" width="28" height="28" viewBox="0 0 28 28"><circle cx="14" cy="14" r="14" fill="#3e86a0"/><path d="M18.3 10.2 A5.4 5.4 0 1 0 18.3 17.8" stroke="#1f2e36" stroke-width="1.9" fill="none"/></svg>
<div style="left:182.00px;top:1728.50px;font:28px/28px 'Liberation Sans', sans-serif;color:#6897bb;white-space:pre;-webkit-text-stroke:0.35px currentColor;width:169px;overflow:hidden;">TopKSort</div>
<svg style="left:78px;top:1774px;" width="12" height="18" viewBox="0 0 12 18"><path d="M2 1.5 L9 8.5 L2 15.5" stroke="#afb1b3" stroke-width="2.2" fill="none"/></svg>
<svg style="left:110px;top:1771px;overflow:hidden" width="28" height="22" viewBox="0 0 28 22"><path d="M0 0 H11 L14 4 H28 V22 H0 Z" fill="#87939a"/><circle cx="10" cy="13" r="3.6" fill="#2b2b2b"/></svg>
<div style="left:146.00px;top:1768.50px;font:28px/28px 'Liberation Sans', sans-serif;color:#bbbbbb;white-space:pre;-webkit-text-stroke:0.35px currentColor;width:205px;overflow:hidden;">types</div>
<svg style="left:42px;top:1814px;" width="12" height="18" viewBox="0 0 12 18"><path d="M2 1.5 L9 8.5 L2 15.5" stroke="#afb1b3" stroke-width="2.2" fill="none"/></svg>
<svg style="left:74px;top:1811px;overflow:hidden" width="28" height="22" viewBox="0 0 28 22"><path d="M0 0 H11 L14 4 H28 V22 H0 Z" fill="#87939a"/><circle cx="10" cy="13" r="3.6" fill="#2b2b2b"/></svg>
<div style="left:110.00px;top:1808.50px;font:28px/28px 'Liberation Sans', sans-serif;color:#bbbbbb;white-space:pre;-webkit-text-stroke:0.35px currentColor;width:241px;overflow:hidden;">wordcorrector</div>
<svg style="left:42px;top:1854px;" width="12" height="18" viewBox="0 0 12 18"><path d="M2 1.5 L9 8.5 L2 15.5" stroke="#afb1b3" stroke-width="2.2" fill="none"/></svg>
<svg style="left:74px;top:1851px;overflow:hidden" width="28" height="22" viewBox="0 0 28 22"><path d="M0 0 H11 L14 4 H28 V22 H0 Z" fill="#87939a"/><circle cx="10" cy="13" r="3.6" fill="#2b2b2b"/></svg>
<div style="left:110.00px;top:1848.50px;font:28px/28px 'Liberation Sans', sans-serif;color:#bbbbbb;white-space:pre;-webkit-text-stroke:0.35px currentColor;width:241px;overflow:hidden;">wordsuggestor</div>
<svg style="left:38px;top:1891px;overflow:hidden" width="28" height="22" viewBox="0 0 28 22"><path d="M0 0 H11 L14 4 H28 V22 H0 Z" fill="#5c9e46"/></svg>
<div style="left:74.00px;top:1888.50px;font:28px/28px 'Liberation Sans', sans-serif;color:#bbbbbb;white-space:pre;-webkit-text-stroke:0.35px currentColor;width:277px;overflow:hidden;">tests</div>
<svg style="left:42px;top:1928px;" width="22" height="28" viewBox="0 0 22 28"><path d="M0 8.1 L8.1 0 V8.1 Z" fill="#8e9aa2"/><path d="M9.9 0 H20.1 V27.9 H0 V9.9 H9.9 Z" fill="#8e9aa2"/></svg>
<div style="left:74.00px;top:1928.50px;font:28px/28px 'Liberation Sans', sans-serif;color:#bbbbbb;white-space:pre;-webkit-text-stroke:0.35px currentColor;width:277px;overflow:hidden;">.gitignore</div>
<svg style="left:42px;top:1968px;" width="22" height="28" viewBox="0 0 22 28"><path d="M0 8.1 L8.1 0 V8.1 Z" fill="#8e9aa2"/><path d="M9.9 0 H20.1 V27.9 H0 V9.9 H9.9 Z" fill="#8e9aa2"/></svg>
<div style="left:74.00px;top:1968.50px;font:28px/28px 'Liberation Sans', sans-serif;color:#bbbbbb;white-space:pre;-webkit-text-stroke:0.35px currentColor;width:277px;overflow:hidden;">.gitlab-ci.yml</div>
<svg style="left:42px;top:2008px;" width="22" height="28" viewBox="0 0 22 28"><path d="M0 8.1 L8.1 0 V8.1 Z" fill="#8e9aa2"/><path d="M9.9 0 H20.1 V27.9 H0 V9.9 H9.9 Z" fill="#8e9aa2"/></svg>
<div style="left:74.00px;top:2008.50px;font:28px/28px 'Liberation Sans', sans-serif;color:#bbbbbb;white-space:pre;-webkit-text-stroke:0.35px currentColor;width:277px;overflow:hidden;">project06-beaverchat.iml</div>
<div style="left:38.00px;top:2048.50px;font:28px/28px 'Liberation Sans', sans-serif;color:#bbbbbb;white-space:pre;-webkit-text-stroke:0.35px currentColor;width:313px;overflow:hidden;">External Libraries</div>
<div style="left:38.00px;top:2088.50px;font:28px/28px 'Liberation Sans', sans-serif;color:#bbbbbb;white-space:pre;-webkit-text-stroke:0.35px currentColor;width:313px;overflow:hidden;">Scratches and Consoles</div>
<svg style="left:46px;top:1938px;" width="24" height="24" viewBox="0 0 24 24"><circle cx="12.6" cy="12" r="7.6" fill="#3c3f41"/><circle cx="12.6" cy="12" r="6" fill="none" stroke="#a3b3c2" stroke-width="2"/><path d="M8.6 16 L16.6 8" stroke="#a3b3c2" stroke-width="2"/></svg>
<svg style="left:42px;top:1983.5px;" width="26" height="15" viewBox="0 0 26 15"><rect x="0" y="0" width="26" height="14.5" fill="#c8727f"/><text x="11" y="12.8" text-anchor="middle" font-family="Liberation Sans" font-weight="bold" font-size="13.5" fill="#3a2a2e">YML</text></svg>
<svg style="left:56px;top:2026px;" width="12" height="12" viewBox="0 0 12 12"><rect x="0" y="0" width="12" height="11.7" fill="#1d1b1c"/><rect x="1.7" y="7.6" width="6.5" height="2.7" fill="#eee"/></svg>
<div style="left:42px;top:1712px;width:310px;height:0px;background:transparent;"></div>
<div style="left:324px;top:1191px;width:28px;height:3px;background:#bc3f3c;"></div>
<div style="left:0px;top:132px;width:41px;height:2018px;background:#3c3f41;"></div>
<div style="left:0px;top:132px;width:41px;height:143px;background:#2f3133;"></div>
<div style="left:41px;top:132px;width:1px;height:2018px;background:#323232;"></div>
<div style="left:-14.2px;top:172.0px;width:70.5px;height:22.5px;font:22.5px/22.5px 'Liberation Sans', sans-serif;color:#ececec;text-align:center;white-space:pre;transform:rotate(-90deg);-webkit-text-stroke:0.35px currentColor">Project</div>
<svg style="left:10px;top:231px;" width="22" height="19" viewBox="0 0 22 19"><path d="M0 0 H8 L10 3 H22 V19 H0 Z" fill="#c9cbcd"/></svg>
<div style="left:-17.8px;top:323.0px;width:77.5px;height:22.5px;font:22.5px/22.5px 'Liberation Sans', sans-serif;color:#bbbbbb;text-align:center;white-space:pre;transform:rotate(-90deg);-webkit-text-stroke:0.35px currentColor">Commit</div>
<svg style="left:8px;top:384px;" width="26" height="20" viewBox="0 0 26 20"><circle cx="13" cy="10" r="5.6" stroke="#afb1b3" stroke-width="3.6" fill="none"/><path d="M0 10 H7 M19 10 H26" stroke="#afb1b3" stroke-width="3.6"/></svg>
<div style="left:-25.5px;top:1845.2px;width:93px;height:22.7px;font:22.7px/22.7px 'Liberation Sans', sans-serif;color:#bbbbbb;text-align:center;white-space:pre;transform:rotate(-90deg);-webkit-text-stroke:0.35px currentColor">Structure</div>
<svg style="left:12px;top:1915px;" width="19" height="20" viewBox="0 0 19 20"><rect x="0" y="11" width="8" height="8" fill="#afb1b3"/><rect x="11" y="11" width="8" height="8" fill="#afb1b3"/><rect x="11" y="0" width="8" height="8" fill="#afb1b3"/></svg>
<div style="left:-34.5px;top:2023.3px;width:111px;height:22.3px;font:22.3px/22.3px 'Liberation Sans', sans-serif;color:#bbbbbb;text-align:center;white-space:pre;transform:rotate(-90deg);-webkit-text-stroke:0.35px currentColor">Bookmarks</div>
<svg style="left:12px;top:2101px;" width="19" height="24" viewBox="0 0 19 24"><path d="M0 0 H19 V23 L9.5 15 L0 23 Z" fill="#afb1b3"/></svg>
<svg style="left:60px;top:2160px;" width="21" height="25" viewBox="0 0 21 25"><circle cx="4" cy="4" r="3" fill="#afb1b3"/><circle cx="4" cy="21" r="3" fill="#afb1b3"/><circle cx="16" cy="7" r="3" fill="#afb1b3"/><path d="M4 4 V21 M16 7 C16 14 5 13 4 19" stroke="#afb1b3" stroke-width="3" fill="none"/></svg>
<div style="left:92.00px;top:2161.64px;font:22.4px/22.4px 'Liberation Sans', sans-serif;color:#bbbbbb;white-space:pre;-webkit-text-stroke:0.35px currentColor;">Git</div>
<svg style="left:160px;top:2160px;" width="26" height="26" viewBox="0 0 26 26"><circle cx="10" cy="10" r="7.5" stroke="#afb1b3" stroke-width="3" fill="none"/><path d="M15.5 15.5 L24 24" stroke="#afb1b3" stroke-width="3.5"/></svg>
<div style="left:193.50px;top:2162.32px;font:21.6px/21.6px 'Liberation Sans', sans-serif;color:#bbbbbb;white-space:pre;-webkit-text-stroke:0.35px currentColor;">Find</div>
<svg style="left:277px;top:2160px;" width="26" height="26" viewBox="0 0 26 26"><path d="M1 1 L19 11 L1 21 Z" fill="#afb1b3"/><circle cx="19" cy="20.5" r="4.5" fill="#2bd62b"/></svg>
<div style="left:308.00px;top:2162.65px;font:21.2px/21.2px 'Liberation Sans', sans-serif;color:#bbbbbb;white-space:pre;-webkit-text-stroke:0.35px currentColor;">Run</div>
<svg style="left:388px;top:2163px;" width="22" height="18" viewBox="0 0 22 18"><path d="M0 0.2 H3.8 V3.8 H0 Z M0 6.6 H3.8 V10.2 H0 Z M0 13.2 H3.8 V16.8 H0 Z M6.3 0.2 H20.2 V3.8 H6.3 Z M6.3 6.6 H20.2 V10.2 H6.3 Z M6.3 13.2 H20.2 V16.8 H6.3 Z" fill="#afb1b3"/></svg>
<div style="left:418.50px;top:2161.64px;font:22.4px/22.4px 'Liberation Sans', sans-serif;color:#bbbbbb;white-space:pre;-webkit-text-stroke:0.35px currentColor;letter-spacing:-1.2px;">TODO</div>
<svg style="left:522px;top:2160.5px;" width="22" height="22" viewBox="0 0 22 22"><circle cx="11" cy="11" r="10.4" fill="#c75450"/><rect x="9.1" y="4" width="3.8" height="5.6" fill="#3c3f41"/><rect x="9.1" y="13.2" width="3.8" height="3.6" fill="#3c3f41"/></svg>
<div style="left:553.00px;top:2161.64px;font:22.4px/22.4px 'Liberation Sans', sans-serif;color:#bbbbbb;white-space:pre;-webkit-text-stroke:0.35px currentColor;">Problems</div>
<svg style="left:694px;top:2158px;" width="30" height="30" viewBox="0 0 30 30"><path d="M7 2 L10 6 M17 2 L14 6" stroke="#afb1b3" stroke-width="2.5"/><ellipse cx="12" cy="15" rx="8" ry="9.5" fill="#afb1b3"/><path d="M0 11 H24 M0 16 H24 M0 21 H24" stroke="#afb1b3" stroke-width="2.5"/><circle cx="22" cy="24.5" r="4.5" fill="#2bd62b" stroke="#3c3f41" stroke-width="1"/></svg>
<div style="left:725.50px;top:2161.72px;font:22.3px/22.3px 'Liberation Sans', sans-serif;color:#bbbbbb;white-space:pre;-webkit-text-stroke:0.35px currentColor;">Debug</div>
<svg style="left:835px;top:2161px;" width="24" height="23" viewBox="0 0 24 23"><rect x="0" y="0" width="23" height="23" fill="#afb1b3"/><path d="M4 5 L10 10 L4 15" stroke="#3c3f41" stroke-width="2.2" fill="none"/><path d="M11 17 H19" stroke="#3c3f41" stroke-width="2.2"/></svg>
<div style="left:867.50px;top:2161.81px;font:22.2px/22.2px 'Liberation Sans', sans-serif;color:#bbbbbb;white-space:pre;-webkit-text-stroke:0.35px currentColor;">Terminal</div>
<svg style="left:993px;top:2160px;" width="28" height="27" viewBox="0 0 28 27"><path d="M2 8 L10 1 L15 6 L12 9 L26 23 L23 26 L9 12 L6 14 Z" fill="#afb1b3"/></svg>
<div style="left:1028.00px;top:2162.06px;font:21.9px/21.9px 'Liberation Sans', sans-serif;color:#bbbbbb;white-space:pre;-webkit-text-stroke:0.35px currentColor;">Build</div>
<svg style="left:3259px;top:2159px;" width="28" height="28" viewBox="0 0 28 28"><path d="M13.5 1 A12.5 12.5 0 1 0 26.5 13.5 V27 H13.5 Z" fill="#f0a732"/><path d="M1 13.5 A12.5 12.5 0 0 1 26 13.5 V27 H13.5 A12.5 12.5 0 0 1 1 13.5Z" fill="#f0a732"/><text x="13" y="21" text-anchor="middle" font-family="Liberation Sans" font-weight="bold" font-size="18" fill="#2b2b2b">3</text></svg>
<div style="left:3293.50px;top:2161.81px;font:22.2px/22.2px 'Liberation Sans', sans-serif;color:#bbbbbb;white-space:pre;-webkit-text-stroke:0.35px currentColor;">Event Log</div>
<svg style="left:11px;top:2200px;" width="27" height="27" viewBox="0 0 27 27"><rect x="7" y="1" width="18" height="18" fill="none" stroke="#afb1b3" stroke-width="2.2"/><path d="M2 7 V25 H20" stroke="#afb1b3" stroke-width="2.2" fill="none"/></svg>
<div style="left:61.50px;top:2203.95px;font:23.1px/23.1px 'Liberation Sans', sans-serif;color:#bbbbbb;white-space:pre;-webkit-text-stroke:0.35px currentColor;">All files are up-to-date (6 minutes ago)</div>
<div style="left:2933.50px;top:2203.86px;font:23.2px/23.2px 'Liberation Sans', sans-serif;color:#bbbbbb;white-space:pre;-webkit-text-stroke:0.35px currentColor;">164:28</div>
<div style="left:3028.50px;top:2205.55px;font:21.2px/21.2px 'Liberation Sans', sans-serif;color:#bbbbbb;white-space:pre;-webkit-text-stroke:0.35px currentColor;">LF</div>
<div style="left:3076.30px;top:2204.45px;font:22.5px/22.5px 'Liberation Sans', sans-serif;color:#bbbbbb;white-space:pre;-webkit-text-stroke:0.35px currentColor;">UTF-8</div>
<div style="left:3167.00px;top:2204.37px;font:22.6px/22.6px 'Liberation Sans', sans-serif;color:#bbbbbb;white-space:pre;-webkit-text-stroke:0.35px currentColor;">4 spaces</div>
<svg style="left:3285px;top:2200px;" width="21" height="29" viewBox="0 0 21 29"><circle cx="4" cy="4" r="3" fill="#afb1b3"/><circle cx="4" cy="25" r="3" fill="#afb1b3"/><circle cx="17" cy="5" r="3" fill="#afb1b3"/><path d="M4 4 V25 M17 5 C17 14 5 15 4 22" stroke="#afb1b3" stroke-width="3" fill="none"/></svg>
<div style="left:3315.50px;top:2204.45px;font:22.5px/22.5px 'Liberation Sans', sans-serif;color:#bbbbbb;white-space:pre;-webkit-text-stroke:0.35px currentColor;">master</div>
<svg style="left:3405px;top:2202px;" width="24" height="23" viewBox="0 0 24 23"><path d="M4 10 V6 A5.5 5.5 0 0 1 15 6" stroke="#afb1b3" stroke-width="3" fill="none"/><rect x="7" y="10" width="16" height="12" fill="#afb1b3"/></svg>
</div></body></html>
